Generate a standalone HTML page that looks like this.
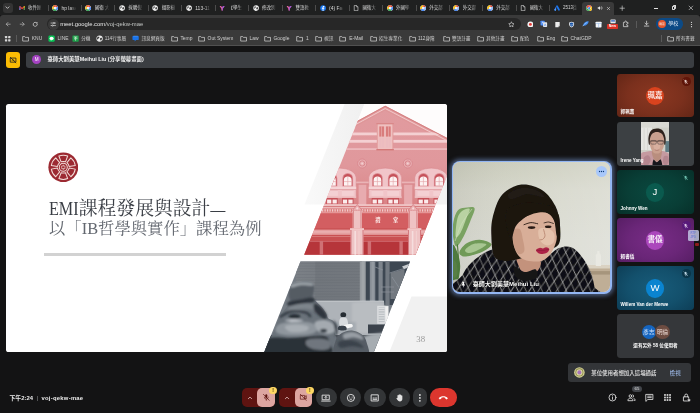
<!DOCTYPE html>
<html lang="zh-Hant">
<head>
<meta charset="utf-8">
<title>Meet - voj-qekw-mae</title>
<style>
*{box-sizing:border-box;margin:0;padding:0}
html,body{width:700px;height:413px;overflow:hidden;background:#131314}
body{font-family:"Liberation Sans","Noto Sans CJK TC",sans-serif;color:#fff;position:relative}
#stage{position:absolute;left:0;top:0;width:700px;height:413px;overflow:hidden;background:#131314;will-change:transform}
#stage div,#stage span,#stage svg{position:absolute}
/* ---------- browser chrome ---------- */
#tabbar{left:0;top:0;width:700px;height:15.3px;background:#1f2020}
#toolbar{left:0;top:15.3px;width:700px;height:17.4px;background:#3a3a3a;border-radius:3px 3px 0 0}
#bookbar{left:0;top:32.6px;width:700px;height:13.4px;background:#3a3a3a;border-bottom:0.7px solid #505050}
#omni{left:46.5px;top:17.6px;width:474px;height:12.8px;border-radius:6.4px;background:#272727}
#url{left:60.2px;top:17.6px;height:12.8px;line-height:12.8px;font-size:5.87px;color:#c4c7c5;white-space:nowrap}
#url b{font-weight:400;color:#e8e8e8}
.tab{top:0;height:15.3px;width:33.4px}
.tab .tt{left:12.4px;top:0;width:15.4px;height:15.3px;line-height:16px;font-size:4.5px;color:#d8d8d8;white-space:nowrap;overflow:hidden;-webkit-mask-image:linear-gradient(90deg,#000 58%,transparent 96%);mask-image:linear-gradient(90deg,#000 58%,transparent 96%)}
.tab .tt.la{font-size:5px}
.tab .sep{left:32px;top:4.6px;width:0.6px;height:6.2px;background:#4c4c4c}
.tab svg{left:3.1px;top:4.6px;width:6.2px;height:6.2px}
#atab{left:581.6px;top:2px;width:32.6px;height:13.4px;background:#3a3a3a;border-radius:3px 3px 0 0}
.bm{top:33px;height:12.6px;line-height:12.8px;font-size:4.65px;color:#d0d0d0;white-space:nowrap}
.bi{top:35.6px;width:7px;height:7px}
.ext{top:20.3px;width:7.6px;height:7.6px}
/* ---------- meet ---------- */
#pbar{left:26.2px;top:52.1px;width:667.4px;height:15.6px;border-radius:3px;background:#3b3e42}
#pbar .av{left:6px;top:3.3px;width:9px;height:9px;border-radius:50%;background:#a442c2;font-size:4.6px;line-height:9.2px;text-align:center;color:#fff}
#pbar .tx{left:21.2px;top:0;height:15.6px;line-height:15.8px;font-size:5.4px;font-weight:700;white-space:nowrap;color:#f3f3f3}
#pico{left:6px;top:51.9px;width:14px;height:16px;border-radius:3px;background:#fbbc04}
#slide{left:6px;top:103.7px;width:441.3px;height:248.4px;border-radius:2.6px;background:#fff;overflow:hidden}
#t1{left:43.2px;top:93px;height:24px;line-height:24px;font-family:"Liberation Serif","Noto Serif CJK SC",serif;font-size:18.85px;color:#3a3e45;white-space:nowrap;letter-spacing:-0.05px}
#t2{left:43px;top:114.2px;height:22px;line-height:22px;font-family:"Liberation Serif","Noto Serif CJK SC",serif;font-size:16.35px;color:#62676f;white-space:nowrap}
#rule{left:38.3px;top:148.9px;width:182.2px;height:3px;background:#d2d2d2}
#pgn{left:410.3px;top:230.6px;font-family:"Liberation Serif",serif;font-size:8.8px;line-height:11px;color:#999;letter-spacing:0.1px}
#main{left:452px;top:161.2px;width:159.6px;height:132.4px;border-radius:8px;background:#93b6f3;box-shadow:0 0 4px 1.6px rgba(130,165,230,.5)}
#main .in{left:1.2px;top:1.2px;width:157.2px;height:130px;border-radius:6.8px;overflow:hidden;background:#d9dacf}
#main .nm{left:19.6px;top:116.9px;font-size:6.05px;line-height:10px;font-weight:700;color:#fff;white-space:nowrap;text-shadow:0 0 1.5px rgba(0,0,0,.9),0 0 1px rgba(0,0,0,.8)}
#main .more{left:142.7px;top:4px;width:11px;height:11px;border-radius:50%;background:#a8c7fa}
.tile{left:616.8px;width:77.4px;height:43.8px;border-radius:3.4px;overflow:hidden}
.tile .nm{left:3.8px;top:34.8px;height:8px;line-height:8px;font-size:4.55px;font-weight:700;color:#fff;white-space:nowrap}
.tile .av{left:28.9px;top:13.1px;width:18.6px;height:18.6px;border-radius:50%;text-align:center;line-height:18.8px;color:#fff;font-weight:500}
.tile .mu{left:65.1px;top:3.4px;width:8.8px;height:8.8px;border-radius:50%}
.tile .mu svg{left:1.6px;top:1.6px;width:5.6px;height:5.6px}
#toast{left:568px;top:362.6px;width:123px;height:19.8px;border-radius:3px;background:#333538}
#toast .tx{left:23.2px;top:0;height:19.8px;line-height:20px;font-size:5.45px;font-weight:500;color:#e6e6e6;white-space:nowrap}
#toast .lk{left:101.8px;top:0;height:19.8px;line-height:20px;font-size:5.45px;color:#a8c7fa;white-space:nowrap}
#clock{left:9.5px;top:391.7px;height:12px;line-height:12px;font-size:5.85px;font-weight:700;color:#ececec;white-space:nowrap}
.cb{top:388.4px;height:18.7px;border-radius:9.35px;background:#333537}
.cb svg{width:9.8px;height:9.8px;top:4.45px}
.ri{top:393.4px;width:9px;height:9px}
</style>
</head>
<body>
<div id="stage">

<div id="tabbar"></div>
<div id="atab"></div>
<div id="toolbar"></div>
<div id="bookbar"></div>
<div style="left:3px;top:2.6px;width:9.6px;height:10px;border-radius:3px;background:#343434"></div>
<svg viewBox="0 0 16 16" style="left:4.3px;top:4.2px;width:7px;height:7px"><path d="M4.5 6.5L8 10l3.5-3.5" fill="none" stroke="#e0e0e0" stroke-width="1.8" stroke-linecap="round" stroke-linejoin="round"/></svg>
<div class="tab" style="left:15.5px"><svg viewBox="0 0 16 16" style=""><path d="M1 3.5h2.6L8 7l4.4-3.5H15v9.5h-2.8V7.6L8 10.8 3.8 7.6V13H1z" fill="#ea4335"/><path d="M1 3.5h2.6v9.5H1z" fill="#4285f4"/><path d="M12.4 3.5H15v9.5h-2.6z" fill="#34a853"/><path d="M12.4 3.5H15v2l-2.6 2z" fill="#fbbc04"/><path d="M1 3.5h2.6v4L1 5.5z" fill="#c5221f"/></svg><div class="tt">收件匣</div><div class="sep"></div></div>
<div class="tab" style="left:49px"><svg viewBox="0 0 16 16" style=""><circle cx="8" cy="8" r="7.6" fill="#fff"/><path d="M8 .8A7.2 7.2 0 0 1 14.2 4.4L8 8z" fill="#ea4335"/><path d="M14.2 4.4A7.2 7.2 0 0 1 11.6 14.2L8 8z" fill="#4285f4"/><path d="M11.6 14.2A7.2 7.2 0 0 1 1.8 11.6L8 8z" fill="#34a853"/><path d="M1.8 11.6A7.2 7.2 0 0 1 8 .8L8 8z" fill="#fbbc04"/><path d="M3 3A7.2 7.2 0 0 1 8 .8L8 8z" fill="#ea4335"/><circle cx="8" cy="8" r="3.6" fill="#fff"/><circle cx="8" cy="8" r="2.7" fill="#e8eef8"/></svg><div class="tt la">hp laser</div><div class="sep"></div></div>
<div class="tab" style="left:82.4px"><svg viewBox="0 0 16 16" style=""><circle cx="8" cy="8" r="7.6" fill="#fff"/><path d="M8 .8A7.2 7.2 0 0 1 14.2 4.4L8 8z" fill="#ea4335"/><path d="M14.2 4.4A7.2 7.2 0 0 1 11.6 14.2L8 8z" fill="#4285f4"/><path d="M11.6 14.2A7.2 7.2 0 0 1 1.8 11.6L8 8z" fill="#34a853"/><path d="M1.8 11.6A7.2 7.2 0 0 1 8 .8L8 8z" fill="#fbbc04"/><path d="M3 3A7.2 7.2 0 0 1 8 .8L8 8z" fill="#ea4335"/><circle cx="8" cy="8" r="3.6" fill="#fff"/><circle cx="8" cy="8" r="2.7" fill="#e8eef8"/></svg><div class="tt">國衛 大</div><div class="sep"></div></div>
<div class="tab" style="left:115.9px"><svg viewBox="0 0 16 16" style=""><circle cx="8" cy="8" r="7.2" fill="#f1f1f1"/><path d="M4.5 3.2l2.6.6.6 2-2 1.6-1.4 2.4L3 8.2zM9 6.2l3-.8 1.2 3-1.8 3.4-2.2-.6-.8-2.4z" fill="#3c3c3c"/></svg><div class="tt">採購倪</div><div class="sep"></div></div>
<div class="tab" style="left:149.3px"><svg viewBox="0 0 16 16" style=""><circle cx="8" cy="8" r="7.2" fill="#f1f1f1"/><path d="M4.5 3.2l2.6.6.6 2-2 1.6-1.4 2.4L3 8.2zM9 6.2l3-.8 1.2 3-1.8 3.4-2.2-.6-.8-2.4z" fill="#3c3c3c"/></svg><div class="tt">攝影樹</div><div class="sep"></div></div>
<div class="tab" style="left:182.8px"><svg viewBox="0 0 16 16" style=""><circle cx="8" cy="8" r="7.2" fill="#f1f1f1"/><path d="M4.5 3.2l2.6.6.6 2-2 1.6-1.4 2.4L3 8.2zM9 6.2l3-.8 1.2 3-1.8 3.4-2.2-.6-.8-2.4z" fill="#3c3c3c"/></svg><div class="tt la">113-11</div><div class="sep"></div></div>
<div class="tab" style="left:216.2px"><svg viewBox="0 0 16 16" style=""><path d="M1.5 2.5h4L8 6.6l2.5-4.1h4L9.8 9.6v4.4H6.2V9.6z" fill="#e765a6"/><path d="M8 6.6l2.5-4.1h4L9.8 9.6v4.4H8z" fill="#9c57d6"/></svg><div class="tt">【學生</div><div class="sep"></div></div>
<div class="tab" style="left:249.7px"><svg viewBox="0 0 16 16" style=""><circle cx="8" cy="8" r="7.2" fill="#f1f1f1"/><path d="M4.5 3.2l2.6.6.6 2-2 1.6-1.4 2.4L3 8.2zM9 6.2l3-.8 1.2 3-1.8 3.4-2.2-.6-.8-2.4z" fill="#3c3c3c"/></svg><div class="tt">修改別</div><div class="sep"></div></div>
<div class="tab" style="left:283.1px"><svg viewBox="0 0 16 16" style=""><path d="M1.5 2.5h4L8 6.6l2.5-4.1h4L9.8 9.6v4.4H6.2V9.6z" fill="#e765a6"/><path d="M8 6.6l2.5-4.1h4L9.8 9.6v4.4H8z" fill="#9c57d6"/></svg><div class="tt">雙語教</div><div class="sep"></div></div>
<div class="tab" style="left:316.6px"><svg viewBox="0 0 16 16" style=""><circle cx="8" cy="8" r="7.5" fill="#1877f2"/><path d="M9 15.3V9.6h1.9l.3-2.2H9V6c0-.7.2-1.1 1.1-1.1h1.2V3a13 13 0 0 0-1.8-.1C7.9 2.9 6.8 3.9 6.8 5.8v1.6H4.9v2.2h1.9v5.7z" fill="#fff"/></svg><div class="tt la">(4) Fac</div><div class="sep"></div></div>
<div class="tab" style="left:350px"><svg viewBox="0 0 16 16" style=""><path d="M3.2 1.4h6.2l3.4 3.4v9.8H3.2z" fill="none" stroke="#e6e6e6" stroke-width="1.5" stroke-linejoin="round"/><path d="M9.2 1.6v3.4h3.4" fill="none" stroke="#e6e6e6" stroke-width="1.3"/></svg><div class="tt">國衛大</div><div class="sep"></div></div>
<div class="tab" style="left:383.5px"><svg viewBox="0 0 16 16" style=""><circle cx="8" cy="8" r="7.6" fill="#fff"/><path d="M8 .8A7.2 7.2 0 0 1 14.2 4.4L8 8z" fill="#ea4335"/><path d="M14.2 4.4A7.2 7.2 0 0 1 11.6 14.2L8 8z" fill="#4285f4"/><path d="M11.6 14.2A7.2 7.2 0 0 1 1.8 11.6L8 8z" fill="#34a853"/><path d="M1.8 11.6A7.2 7.2 0 0 1 8 .8L8 8z" fill="#fbbc04"/><path d="M3 3A7.2 7.2 0 0 1 8 .8L8 8z" fill="#ea4335"/><circle cx="8" cy="8" r="3.6" fill="#fff"/><circle cx="8" cy="8" r="2.7" fill="#e8eef8"/></svg><div class="tt">外國學</div><div class="sep"></div></div>
<div class="tab" style="left:416.9px"><svg viewBox="0 0 16 16" style=""><circle cx="8" cy="8" r="7.6" fill="#f4f4f4"/><path d="M8 .8A7.2 7.2 0 0 1 14.2 4.4L8 8z" fill="#ea4335"/><path d="M14.2 4.4A7.2 7.2 0 0 1 11.6 14.2L8 8z" fill="#8ab4f8"/><path d="M11.6 14.2A7.2 7.2 0 0 1 1.8 11.6L8 8z" fill="#4285f4"/><path d="M1.8 11.6A7.2 7.2 0 0 1 8 .8L8 8z" fill="#fbbc04"/><circle cx="8" cy="8" r="3.4" fill="#e9eef6"/></svg><div class="tt">外交部</div><div class="sep"></div></div>
<div class="tab" style="left:450.4px"><svg viewBox="0 0 16 16" style=""><circle cx="8" cy="8" r="7.6" fill="#f4f4f4"/><path d="M8 .8A7.2 7.2 0 0 1 14.2 4.4L8 8z" fill="#ea4335"/><path d="M14.2 4.4A7.2 7.2 0 0 1 11.6 14.2L8 8z" fill="#8ab4f8"/><path d="M11.6 14.2A7.2 7.2 0 0 1 1.8 11.6L8 8z" fill="#4285f4"/><path d="M1.8 11.6A7.2 7.2 0 0 1 8 .8L8 8z" fill="#fbbc04"/><circle cx="8" cy="8" r="3.4" fill="#e9eef6"/></svg><div class="tt">外交部</div><div class="sep"></div></div>
<div class="tab" style="left:483.8px"><svg viewBox="0 0 16 16" style=""><circle cx="8" cy="8" r="7.6" fill="#f4f4f4"/><path d="M8 .8A7.2 7.2 0 0 1 14.2 4.4L8 8z" fill="#ea4335"/><path d="M14.2 4.4A7.2 7.2 0 0 1 11.6 14.2L8 8z" fill="#8ab4f8"/><path d="M11.6 14.2A7.2 7.2 0 0 1 1.8 11.6L8 8z" fill="#4285f4"/><path d="M1.8 11.6A7.2 7.2 0 0 1 8 .8L8 8z" fill="#fbbc04"/><circle cx="8" cy="8" r="3.4" fill="#e9eef6"/></svg><div class="tt">外交部</div><div class="sep"></div></div>
<div class="tab" style="left:517.2px"><svg viewBox="0 0 16 16" style=""><path d="M3.2 1.4h6.2l3.4 3.4v9.8H3.2z" fill="none" stroke="#e6e6e6" stroke-width="1.5" stroke-linejoin="round"/><path d="M9.2 1.6v3.4h3.4" fill="none" stroke="#e6e6e6" stroke-width="1.3"/></svg><div class="tt">國衛大</div><div class="sep"></div></div>
<div class="tab" style="left:550.7px"><svg viewBox="0 0 16 16" style=""><path d="M6.2 2.2L1.3 11.2a2.3 2.3 0 0 0 4 2.3z" fill="#3b82f6"/><path d="M9.8 2.2a2.3 2.3 0 0 0-4 2.3l5 9a2.3 2.3 0 0 0 4-2.3z" fill="#1a73e8"/><circle cx="3.3" cy="12.3" r="2.3" fill="#4f9cf9"/></svg><div class="tt">2513街</div></div>
<svg viewBox="0 0 16 16" style="left:586.1px;top:4.7px;width:6.3px;height:6.3px"><circle cx="8" cy="8" r="7.5" fill="#fff"/><path d="M8 .5a7.5 7.5 0 0 1 6.5 3.75H8L4.75 9.9 1.5 4.25A7.5 7.5 0 0 1 8 .5z" fill="#ea4335"/><path d="M14.5 4.25A7.5 7.5 0 0 1 8 15.5l3.25-5.6z" fill="#fbbc04"/><path d="M8 15.5A7.5 7.5 0 0 1 1.5 4.25L4.75 9.9z" fill="#34a853"/><path d="M8 15.5l3.25-5.6H4.75z" fill="#34a853"/><path d="M14.5 4.25H8l3.25 5.65z" fill="#fbbc04"/><circle cx="8" cy="8" r="3.5" fill="#fff"/><circle cx="8" cy="8" r="2.75" fill="#4285f4"/></svg>
<svg viewBox="0 0 16 16" style="left:597px;top:5.4px;width:6px;height:6px"><path d="M2 6v4h2.6L8 13V3L4.6 6z" fill="#e3e3e3"/><path d="M10 5.2a4 4 0 0 1 0 5.6M11.8 3.4a6.5 6.5 0 0 1 0 9.2" fill="none" stroke="#e3e3e3" stroke-width="1.3"/></svg>
<svg viewBox="0 0 16 16" style="left:605.6px;top:5.9px;width:5px;height:5px"><path d="M4 4l8 8M12 4l-8 8" stroke="#e3e3e3" stroke-width="1.7" stroke-linecap="round"/></svg>
<svg viewBox="0 0 16 16" style="left:618.5px;top:5.1px;width:6.4px;height:6.4px"><path d="M8 2.5v11M2.5 8h11" stroke="#dcdcdc" stroke-width="1.6" stroke-linecap="round"/></svg>
<div style="left:654px;top:7.9px;width:4.2px;height:0.6px;background:#e0e0e0"></div>
<div style="left:671.6px;top:6.4px;width:3.6px;height:3.6px;border:0.55px solid #dcdcdc;border-radius:0.8px"></div>
<div style="left:672.7px;top:5.3px;width:3.6px;height:3.6px;border-top:0.55px solid #dcdcdc;border-right:0.55px solid #dcdcdc;border-radius:0.8px"></div>
<svg viewBox="0 0 16 16" style="left:688.3px;top:5.2px;width:5.8px;height:5.8px"><path d="M3 3l10 10M13 3L3 13" stroke="#ececec" stroke-width="1.6" stroke-linecap="round"/></svg>
<svg viewBox="0 0 16 16" style="left:5.2px;top:20.8px;width:6.4px;height:6.4px"><path d="M13 8H3.5M7.5 3.5L3 8l4.5 4.5" fill="none" stroke="#bdbdbd" stroke-width="1.7" stroke-linecap="round" stroke-linejoin="round"/></svg>
<svg viewBox="0 0 16 16" style="left:18.8px;top:20.8px;width:6.4px;height:6.4px"><path d="M3 8h9.5M8.5 3.5L13 8l-4.5 4.5" fill="none" stroke="#bdbdbd" stroke-width="1.7" stroke-linecap="round" stroke-linejoin="round"/></svg>
<svg viewBox="0 0 16 16" style="left:32.4px;top:20.7px;width:6.6px;height:6.6px"><path d="M13 8a5 5 0 1 1-1.6-3.7" fill="none" stroke="#e0e0e0" stroke-width="1.7" stroke-linecap="round"/><path d="M13.3 2.2v3.6H9.7z" fill="#e0e0e0"/></svg>
<div id="omni"></div>
<div style="left:47.5px;top:18.5px;width:11px;height:11px;border-radius:50%;background:#3a3a3a"></div>
<svg viewBox="0 0 16 16" style="left:49.7px;top:20.7px;width:6.6px;height:6.6px"><path d="M2.5 5h5M11.5 5h2M2.5 11h2M8.5 11h5" stroke="#e6e6e6" stroke-width="1.5" stroke-linecap="round"/><circle cx="9.6" cy="5" r="1.7" fill="none" stroke="#e6e6e6" stroke-width="1.4"/><circle cx="6.4" cy="11" r="1.7" fill="none" stroke="#e6e6e6" stroke-width="1.4"/></svg>
<div id="url"><b>meet.google.com</b>/voj-qekw-mae</div>
<svg viewBox="0 0 16 16" style="left:507.7px;top:20.6px;width:6.8px;height:6.8px"><path d="M8 1.8l1.9 4.1 4.4.5-3.3 3 .9 4.4L8 11.6l-3.9 2.2.9-4.4-3.3-3 4.4-.5z" fill="none" stroke="#e3e3e3" stroke-width="1.4" stroke-linejoin="round"/></svg>
<svg viewBox="0 0 16 16" style="left:526.6px;top:20.7px;width:6.8px;height:6.8px"><circle cx="8" cy="8" r="7" fill="#f4f4f4"/><circle cx="8" cy="8" r="3.4" fill="#e53935"/></svg>
<svg viewBox="0 0 16 16" style="left:540px;top:20.3px;width:7.6px;height:7.6px"><rect x="1" y="1.5" width="9" height="10" rx="1.3" fill="#4285f4"/><rect x="6.5" y="5" width="8.5" height="9.5" rx="1.3" fill="#e8eaed"/><path d="M3.5 4.5h4M5.5 3.5v1c0 2-1 3.5-2.5 4" stroke="#fff" stroke-width="1" fill="none"/><path d="M9 13l1.8-5 1.8 5" stroke="#4285f4" stroke-width="1.1" fill="none"/></svg>
<svg viewBox="0 0 16 16" style="left:553.6px;top:20.6px;width:7px;height:7px"><path d="M3 2h10v9l-3 3H3z" fill="#ececec"/><path d="M13 11h-3v3z" fill="#9a9a9a"/></svg>
<svg viewBox="0 0 16 16" style="left:567.6px;top:20.5px;width:7.2px;height:7.2px"><path d="M8 1.5l5.5 1.8v4.2c0 3.3-2.3 5.8-5.5 7-3.2-1.2-5.5-3.7-5.5-7V3.3z" fill="#e8eaed"/><path d="M8 3.4l3.7 1.2v3c0 2.3-1.5 4-3.7 5-2.2-1-3.7-2.7-3.7-5v-3z" fill="#1a56a8"/><path d="M6 8l1.5 1.5L10.2 6.6" stroke="#fff" stroke-width="1.2" fill="none"/></svg>
<svg viewBox="0 0 16 16" style="left:581.7px;top:20.4px;width:7.4px;height:7.4px"><path d="M1.5 12.5C4 5 9 2.5 14.5 3c-1 5.5-5 9-11 9.5z" fill="#3d8bf0"/><path d="M1.5 13.5c3-4 6-6.5 10-8.5" stroke="#e3f0ff" stroke-width="1" fill="none"/></svg>
<svg viewBox="0 0 16 16" style="left:595px;top:20.5px;width:7.2px;height:7.2px"><rect x="1.5" y="1.5" width="13" height="13" rx="1.5" fill="#f4f7fb"/><path d="M1.5 5.5h13M8 5.5v9" stroke="#8fb4e8" stroke-width="1.2"/></svg>
<svg viewBox="0 0 16 16" style="left:608.5px;top:19.3px;width:7.6px;height:7.6px"><rect x="3" y="1" width="11" height="8" rx="1" fill="#e8eaed"/><rect x="4.5" y="2.5" width="8" height="3" fill="#3b6fc4"/></svg>
<div style="left:607.2px;top:24.2px;width:10.4px;height:4.8px;border-radius:0.8px;background:#d93025;font-size:3.5px;line-height:4.9px;text-align:center;color:#fff;font-weight:700">New</div>
<svg viewBox="0 0 16 16" style="left:622.2px;top:20.3px;width:7.6px;height:7.6px"><path d="M3 5h3V3.8a1.7 1.7 0 0 1 3.4 0V5H12.5v3.2h-1.2a1.7 1.7 0 0 0 0 3.4h1.2V14H3z" fill="none" stroke="#e3e3e3" stroke-width="1.5" stroke-linejoin="round"/></svg>
<div style="left:636px;top:20.6px;width:0.6px;height:7px;background:#5a5a5a"></div>
<svg viewBox="0 0 16 16" style="left:643.2px;top:20.4px;width:7.2px;height:7.2px"><path d="M8 2.5v7.5M4.5 7L8 10.5 11.5 7M3 13.5h10" fill="none" stroke="#e3e3e3" stroke-width="1.6" stroke-linecap="round" stroke-linejoin="round"/></svg>
<div style="left:656px;top:18.3px;width:27.4px;height:11.4px;border-radius:5.7px;background:#0c4a86"></div>
<div style="left:658.2px;top:20.1px;width:7.8px;height:7.8px;border-radius:50%;background:#e2552c;font-size:2.8px;line-height:8px;text-align:center;color:#fff">珮嘉</div>
<div style="left:668.2px;top:18.3px;height:11.4px;line-height:11.6px;font-size:5.1px;color:#dfe9f6;white-space:nowrap">學校</div>
<svg viewBox="0 0 16 16" style="left:687.6px;top:20.5px;width:7px;height:7px"><circle cx="8" cy="3" r="1.4" fill="#e3e3e3"/><circle cx="8" cy="8" r="1.4" fill="#e3e3e3"/><circle cx="8" cy="13" r="1.4" fill="#e3e3e3"/></svg>
<svg viewBox="0 0 16 16" style="left:4px;top:35.2px;width:7.4px;height:7.4px"><rect x="2" y="2" width="5" height="5" rx="1" fill="#d8d8d8"/><rect x="9" y="2" width="5" height="5" rx="1" fill="#d8d8d8"/><rect x="2" y="9" width="5" height="5" rx="1" fill="#d8d8d8"/><rect x="9" y="9" width="5" height="5" rx="1" fill="#d8d8d8"/></svg>
<div style="left:16.4px;top:35.4px;width:0.6px;height:7px;background:#5a5a5a"></div>
<svg viewBox="0 0 16 16" style="left:22px;top:35.4px;width:7.2px;height:7.2px"><path d="M1.5 3.5h4.5l1.5 1.8h7v8.2h-13z" fill="none" stroke="#dcdcdc" stroke-width="1.5" stroke-linejoin="round"/></svg>
<div class="bm" style="left:31.8px;font-size:4.95px">KNU</div>
<svg viewBox="0 0 16 16" style="left:47.8px;top:35.4px;width:7.2px;height:7.2px"><rect x="1" y="1" width="14" height="14" rx="3" fill="#06c755"/><ellipse cx="8" cy="7.6" rx="4.6" ry="3.8" fill="#fff"/><path d="M6.5 10.8l-.3 2 2.4-1.6z" fill="#fff"/></svg>
<div class="bm" style="left:57.6px;font-size:4.95px">LINE</div>
<svg viewBox="0 0 16 16" style="left:71.9px;top:35.4px;width:7.2px;height:7.2px"><rect x="1" y="1" width="14" height="14" rx="1.5" fill="#1e9e4a"/><path d="M4 4.5h8M8 4.5v8M4.5 8.5h3M9.5 8h2.5" stroke="#eaffea" stroke-width="1.5"/></svg>
<div class="bm" style="left:81.2px">分機</div>
<svg viewBox="0 0 16 16" style="left:95.5px;top:35.4px;width:7.2px;height:7.2px"><circle cx="8" cy="8" r="7" fill="#e8e8e8"/><path d="M4 3.5l3 1 .5 2-2.5 1.5-1 2.5-2-2.5zM9.5 6.5l3-.5 1 2.5-2 3.5-2-.5-.5-2.5z" fill="#3a3a3a"/></svg>
<div class="bm" style="left:104.8px">114行事曆</div>
<svg viewBox="0 0 16 16" style="left:132.1px;top:35.4px;width:7.2px;height:7.2px"><path d="M2 2.5h12a1 1 0 0 1 1 1V10a1 1 0 0 1-1 1H9l-3 3.2V11H2a1 1 0 0 1-1-1V3.5a1 1 0 0 1 1-1z" fill="#1a73e8"/><path d="M3 2.5h10" stroke="#6fb1ff" stroke-width="1"/></svg>
<div class="bm" style="left:141.4px">訊息網頁版</div>
<svg viewBox="0 0 16 16" style="left:170.6px;top:35.4px;width:7.2px;height:7.2px"><path d="M1.5 3.5h4.5l1.5 1.8h7v8.2h-13z" fill="none" stroke="#dcdcdc" stroke-width="1.5" stroke-linejoin="round"/></svg>
<div class="bm" style="left:180.4px;font-size:4.95px">Temp</div>
<svg viewBox="0 0 16 16" style="left:197.8px;top:35.4px;width:7.2px;height:7.2px"><path d="M1.5 3.5h4.5l1.5 1.8h7v8.2h-13z" fill="none" stroke="#dcdcdc" stroke-width="1.5" stroke-linejoin="round"/></svg>
<div class="bm" style="left:207.6px;font-size:4.95px">Out System</div>
<svg viewBox="0 0 16 16" style="left:239.6px;top:35.4px;width:7.2px;height:7.2px"><path d="M1.5 3.5h4.5l1.5 1.8h7v8.2h-13z" fill="none" stroke="#dcdcdc" stroke-width="1.5" stroke-linejoin="round"/></svg>
<div class="bm" style="left:249.4px;font-size:4.95px">Law</div>
<svg viewBox="0 0 16 16" style="left:263.7px;top:35.4px;width:7.2px;height:7.2px"><path d="M1.5 3.5h4.5l1.5 1.8h7v8.2h-13z" fill="none" stroke="#dcdcdc" stroke-width="1.5" stroke-linejoin="round"/></svg>
<div class="bm" style="left:273.5px;font-size:4.95px">Google</div>
<svg viewBox="0 0 16 16" style="left:296.1px;top:35.4px;width:7.2px;height:7.2px"><path d="M1.5 3.5h4.5l1.5 1.8h7v8.2h-13z" fill="none" stroke="#dcdcdc" stroke-width="1.5" stroke-linejoin="round"/></svg>
<div class="bm" style="left:305.9px;font-size:4.95px">1</div>
<svg viewBox="0 0 16 16" style="left:314.8px;top:35.4px;width:7.2px;height:7.2px"><path d="M1.5 3.5h4.5l1.5 1.8h7v8.2h-13z" fill="none" stroke="#dcdcdc" stroke-width="1.5" stroke-linejoin="round"/></svg>
<div class="bm" style="left:324.1px">視訊</div>
<svg viewBox="0 0 16 16" style="left:339.4px;top:35.4px;width:7.2px;height:7.2px"><path d="M1.5 3.5h4.5l1.5 1.8h7v8.2h-13z" fill="none" stroke="#dcdcdc" stroke-width="1.5" stroke-linejoin="round"/></svg>
<div class="bm" style="left:349.2px;font-size:4.95px">E-Mail</div>
<svg viewBox="0 0 16 16" style="left:369.8px;top:35.4px;width:7.2px;height:7.2px"><path d="M1.5 3.5h4.5l1.5 1.8h7v8.2h-13z" fill="none" stroke="#dcdcdc" stroke-width="1.5" stroke-linejoin="round"/></svg>
<div class="bm" style="left:379.1px">招生專業化</div>
<svg viewBox="0 0 16 16" style="left:408.7px;top:35.4px;width:7.2px;height:7.2px"><path d="M1.5 3.5h4.5l1.5 1.8h7v8.2h-13z" fill="none" stroke="#dcdcdc" stroke-width="1.5" stroke-linejoin="round"/></svg>
<div class="bm" style="left:418px">112身障</div>
<svg viewBox="0 0 16 16" style="left:442.6px;top:35.4px;width:7.2px;height:7.2px"><path d="M1.5 3.5h4.5l1.5 1.8h7v8.2h-13z" fill="none" stroke="#dcdcdc" stroke-width="1.5" stroke-linejoin="round"/></svg>
<div class="bm" style="left:451.9px">雙語計畫</div>
<svg viewBox="0 0 16 16" style="left:476.8px;top:35.4px;width:7.2px;height:7.2px"><path d="M1.5 3.5h4.5l1.5 1.8h7v8.2h-13z" fill="none" stroke="#dcdcdc" stroke-width="1.5" stroke-linejoin="round"/></svg>
<div class="bm" style="left:486.1px">其他計畫</div>
<svg viewBox="0 0 16 16" style="left:510.6px;top:35.4px;width:7.2px;height:7.2px"><path d="M1.5 3.5h4.5l1.5 1.8h7v8.2h-13z" fill="none" stroke="#dcdcdc" stroke-width="1.5" stroke-linejoin="round"/></svg>
<div class="bm" style="left:519.9px">配色</div>
<svg viewBox="0 0 16 16" style="left:536.6px;top:35.4px;width:7.2px;height:7.2px"><path d="M1.5 3.5h4.5l1.5 1.8h7v8.2h-13z" fill="none" stroke="#dcdcdc" stroke-width="1.5" stroke-linejoin="round"/></svg>
<div class="bm" style="left:546.4px;font-size:4.95px">Eng</div>
<svg viewBox="0 0 16 16" style="left:560.7px;top:35.4px;width:7.2px;height:7.2px"><path d="M1.5 3.5h4.5l1.5 1.8h7v8.2h-13z" fill="none" stroke="#dcdcdc" stroke-width="1.5" stroke-linejoin="round"/></svg>
<div class="bm" style="left:570.5px;font-size:4.95px">ChatGDP</div>
<svg viewBox="0 0 16 16" style="left:666.7px;top:35.4px;width:7.2px;height:7.2px"><path d="M1.5 3.5h4.5l1.5 1.8h7v8.2h-13z" fill="none" stroke="#dcdcdc" stroke-width="1.5" stroke-linejoin="round"/></svg>
<div class="bm" style="left:676px">所有書籤</div>
<div style="left:661px;top:35.4px;width:0.6px;height:7px;background:#5a5a5a"></div>
<div id="pico"></div>
<svg viewBox="0 0 16 16" style="left:8.9px;top:55.8px;width:8.2px;height:8.2px"><path d="M2.5 4h11v8h-11z" fill="none" stroke="#1f1f1f" stroke-width="1.6" stroke-linejoin="round"/><path d="M5.5 9.5L8 7l2.5 2.5" fill="none" stroke="#1f1f1f" stroke-width="1.3"/><path d="M2 2l12 12" stroke="#1f1f1f" stroke-width="1.5"/></svg>
<div id="pbar"><div class="av">M</div><div class="tx">臺師大劉美慧Meihui Liu (分享螢幕畫面)</div></div>
<div id="slide">
<svg viewBox="0 0 700 413" style="left:-6px;top:-103.7px;width:700px;height:413px">
<defs>
<clipPath id="cpR"><path d="M364.6 103.7H476L415.5 254.7H304.2z"/></clipPath>
<clipPath id="cpW"><path d="M385.2 106.8L450 140.5V256H300V153z"/></clipPath>
<clipPath id="cpG"><path d="M300.5 261.5H410L373.8 352.1H264.3z"/></clipPath>
<linearGradient id="gWall" x1="0" y1="104" x2="0" y2="255" gradientUnits="userSpaceOnUse">
<stop offset="0" stop-color="#e19b9f"/><stop offset="0.4" stop-color="#e0989c"/><stop offset="0.62" stop-color="#db888b"/><stop offset="0.8" stop-color="#d67274"/><stop offset="1" stop-color="#c95454"/>
</linearGradient>
<linearGradient id="gBand" x1="305" y1="0" x2="365" y2="0" gradientUnits="userSpaceOnUse">
<stop offset="0" stop-color="#f9f9f9"/><stop offset="1" stop-color="#f0f0f0"/>
</linearGradient>
<linearGradient id="gBrick" x1="296" y1="0" x2="362" y2="0" gradientUnits="userSpaceOnUse"><stop offset="0" stop-color="#7b8086"/><stop offset="0.28" stop-color="#787d83"/><stop offset="0.3" stop-color="#71767c"/><stop offset="1" stop-color="#73787e"/></linearGradient>
<filter id="b1" x="-20%" y="-20%" width="140%" height="140%"><feGaussianBlur stdDeviation="0.5"/></filter>
<filter id="b2" x="-20%" y="-20%" width="140%" height="140%"><feGaussianBlur stdDeviation="1.2"/></filter>
<filter id="b3" x="-30%" y="-30%" width="160%" height="160%"><feGaussianBlur stdDeviation="2.5"/></filter>
</defs>
<!-- decorative light grey shapes -->
<path d="M344.8 103.7H364.6L324.3 204.5H304.5z" fill="url(#gBand)"/>
<path d="M448 173.5V204.5H435.6z" fill="#f3f3f3"/>
<path d="M411.5 296.5H448V353H389z" fill="#f1f1f1"/>
<!-- red building -->
<g clip-path="url(#cpR)" id="bldg">
<rect x="300" y="103" width="150" height="153" fill="#fefcfc"/>
<path d="M385.2 105.8L450 139.5V256H300V152.7z" fill="url(#gWall)"/>
<path d="M330 136.2L385.2 106.3 450 140" stroke="#d58282" stroke-width="1.1" fill="none"/>
<path d="M330 138.4L385.2 108.5 450 142.2" stroke="#f2c8c8" stroke-width="1" fill="none"/>
<path d="M330 140L385.2 110.1 450 143.8" stroke="#de9393" stroke-width="0.6" fill="none"/>
<g clip-path="url(#cpW)">
<rect x="340" y="132.5" width="110" height="2.8" fill="#f4d0d2"/>
<rect x="340" y="139.9" width="110" height="2.8" fill="#f4d0d2"/>
<rect x="340" y="148.4" width="110" height="1.3" fill="#f1c6c9"/>
</g>
<rect x="376.8" y="123.6" width="16.6" height="27" fill="#e19a9a"/>
<rect x="377.7" y="124.2" width="14.7" height="25" fill="#efc0c0"/>
<rect x="379.3" y="126.4" width="4.8" height="10.2" fill="#d97c7c"/>
<rect x="385.9" y="126.4" width="4.8" height="10.2" fill="#d97c7c"/>
<rect x="379.3" y="137.6" width="4.8" height="10" fill="#ecbcc0"/>
<rect x="385.9" y="137.6" width="4.8" height="10" fill="#ecbcc0"/>
<rect x="381.5" y="126.4" width="0.5" height="21" fill="#efc0c0"/>
<rect x="388.1" y="126.4" width="0.5" height="21" fill="#efc0c0"/>
<rect x="376.4" y="149" width="17.4" height="1.4" fill="#d27878"/>
<rect x="376.4" y="123.2" width="17.4" height="1" fill="#d88484"/>
<circle cx="362.2" cy="163.5" r="4.5" fill="#e9b0b3" stroke="#d58086" stroke-width="0.7"/>
<circle cx="362.2" cy="163.5" r="2.6" fill="none" stroke="#d37e84" stroke-width="0.8"/>
<circle cx="362.2" cy="163.5" r="0.9" fill="#f3d0d2"/>
<circle cx="407.8" cy="163.5" r="4.5" fill="#e9b0b3" stroke="#d58086" stroke-width="0.7"/>
<circle cx="407.8" cy="163.5" r="2.6" fill="none" stroke="#d37e84" stroke-width="0.8"/>
<circle cx="407.8" cy="163.5" r="0.9" fill="#f3d0d2"/>
<path d="M323.2 197.1V177.6a16.5 9.5 0 0 1 33 0V197.1z" fill="#f1c5c9" stroke="#d9868c" stroke-width="0.6"/>
<path d="M326.6 186.4V178.4a5.3 5.3 0 0 1 10.7 0V186.4z" fill="#dd8d94"/>
<path d="M327.4 186V178.6a4.5 4.6 0 0 1 9.1 0V186z" fill="#c6525a"/>
<path d="M328.1 185.7V180.3a3.8 3.7 0 0 1 7.7 0V185.7z" fill="#fdf3f3"/>
<path d="M331.9 176.8V185.7M328.1 181.6h7.7" stroke="#e2a0a5" stroke-width="0.6" fill="none"/>
<rect x="326" y="189.8" width="11.9" height="6" fill="#f4d0d3"/>
<rect x="326" y="189.8" width="11.9" height="0.6" fill="#e2a2a7"/>
<rect x="326.2" y="197.8" width="11.5" height="6.2" fill="#c6525a"/>
<rect x="327.1" y="199.6" width="4.2" height="3.9" fill="#fcecec"/>
<rect x="332.6" y="199.6" width="4.2" height="3.9" fill="#fcecec"/>
<path d="M342.4 186.4V178.4a5.3 5.3 0 0 1 10.7 0V186.4z" fill="#dd8d94"/>
<path d="M343.2 186V178.6a4.5 4.6 0 0 1 9.1 0V186z" fill="#c6525a"/>
<path d="M343.9 185.7V180.3a3.8 3.7 0 0 1 7.7 0V185.7z" fill="#fdf3f3"/>
<path d="M347.8 176.8V185.7M343.9 181.6h7.7" stroke="#e2a0a5" stroke-width="0.6" fill="none"/>
<rect x="341.8" y="189.8" width="11.9" height="6" fill="#f4d0d3"/>
<rect x="341.8" y="189.8" width="11.9" height="0.6" fill="#e2a2a7"/>
<rect x="342" y="197.8" width="11.5" height="6.2" fill="#c6525a"/>
<rect x="342.9" y="199.6" width="4.2" height="3.9" fill="#fcecec"/>
<rect x="348.4" y="199.6" width="4.2" height="3.9" fill="#fcecec"/>
<rect x="323.2" y="186.7" width="33" height="2.6" fill="#f5d4d6"/>
<rect x="323.2" y="189.3" width="33" height="0.6" fill="#dc9096"/>
<rect x="323.2" y="196.6" width="33" height="1.1" fill="#f5d4d6"/>
<path d="M368.7 197.1V177.6a16.5 9.5 0 0 1 33 0V197.1z" fill="#f1c5c9" stroke="#d9868c" stroke-width="0.6"/>
<path d="M372.1 186.4V178.4a5.3 5.3 0 0 1 10.7 0V186.4z" fill="#dd8d94"/>
<path d="M372.9 186V178.6a4.5 4.6 0 0 1 9.1 0V186z" fill="#c6525a"/>
<path d="M373.6 185.7V180.3a3.8 3.7 0 0 1 7.7 0V185.7z" fill="#fdf3f3"/>
<path d="M377.4 176.8V185.7M373.6 181.6h7.7" stroke="#e2a0a5" stroke-width="0.6" fill="none"/>
<rect x="371.5" y="189.8" width="11.9" height="6" fill="#f4d0d3"/>
<rect x="371.5" y="189.8" width="11.9" height="0.6" fill="#e2a2a7"/>
<rect x="371.7" y="197.8" width="11.5" height="6.2" fill="#c6525a"/>
<rect x="372.6" y="199.6" width="4.2" height="3.9" fill="#fcecec"/>
<rect x="378.1" y="199.6" width="4.2" height="3.9" fill="#fcecec"/>
<path d="M387.9 186.4V178.4a5.3 5.3 0 0 1 10.7 0V186.4z" fill="#dd8d94"/>
<path d="M388.7 186V178.6a4.5 4.6 0 0 1 9.1 0V186z" fill="#c6525a"/>
<path d="M389.4 185.7V180.3a3.8 3.7 0 0 1 7.7 0V185.7z" fill="#fdf3f3"/>
<path d="M393.2 176.8V185.7M389.4 181.6h7.7" stroke="#e2a0a5" stroke-width="0.6" fill="none"/>
<rect x="387.3" y="189.8" width="11.9" height="6" fill="#f4d0d3"/>
<rect x="387.3" y="189.8" width="11.9" height="0.6" fill="#e2a2a7"/>
<rect x="387.5" y="197.8" width="11.5" height="6.2" fill="#c6525a"/>
<rect x="388.4" y="199.6" width="4.2" height="3.9" fill="#fcecec"/>
<rect x="393.9" y="199.6" width="4.2" height="3.9" fill="#fcecec"/>
<rect x="368.7" y="186.7" width="33" height="2.6" fill="#f5d4d6"/>
<rect x="368.7" y="189.3" width="33" height="0.6" fill="#dc9096"/>
<rect x="368.7" y="196.6" width="33" height="1.1" fill="#f5d4d6"/>
<path d="M414.7 197.1V177.6a16.5 9.5 0 0 1 33 0V197.1z" fill="#f1c5c9" stroke="#d9868c" stroke-width="0.6"/>
<path d="M418.1 186.4V178.4a5.3 5.3 0 0 1 10.7 0V186.4z" fill="#dd8d94"/>
<path d="M418.9 186V178.6a4.5 4.6 0 0 1 9.1 0V186z" fill="#c6525a"/>
<path d="M419.6 185.7V180.3a3.8 3.7 0 0 1 7.7 0V185.7z" fill="#fdf3f3"/>
<path d="M423.4 176.8V185.7M419.6 181.6h7.7" stroke="#e2a0a5" stroke-width="0.6" fill="none"/>
<rect x="417.5" y="189.8" width="11.9" height="6" fill="#f4d0d3"/>
<rect x="417.5" y="189.8" width="11.9" height="0.6" fill="#e2a2a7"/>
<rect x="417.7" y="197.8" width="11.5" height="6.2" fill="#c6525a"/>
<rect x="418.6" y="199.6" width="4.2" height="3.9" fill="#fcecec"/>
<rect x="424.1" y="199.6" width="4.2" height="3.9" fill="#fcecec"/>
<path d="M433.9 186.4V178.4a5.3 5.3 0 0 1 10.7 0V186.4z" fill="#dd8d94"/>
<path d="M434.7 186V178.6a4.5 4.6 0 0 1 9.1 0V186z" fill="#c6525a"/>
<path d="M435.4 185.7V180.3a3.8 3.7 0 0 1 7.7 0V185.7z" fill="#fdf3f3"/>
<path d="M439.2 176.8V185.7M435.4 181.6h7.7" stroke="#e2a0a5" stroke-width="0.6" fill="none"/>
<rect x="433.3" y="189.8" width="11.9" height="6" fill="#f4d0d3"/>
<rect x="433.3" y="189.8" width="11.9" height="0.6" fill="#e2a2a7"/>
<rect x="433.5" y="197.8" width="11.5" height="6.2" fill="#c6525a"/>
<rect x="434.4" y="199.6" width="4.2" height="3.9" fill="#fcecec"/>
<rect x="439.9" y="199.6" width="4.2" height="3.9" fill="#fcecec"/>
<rect x="414.7" y="186.7" width="33" height="2.6" fill="#f5d4d6"/>
<rect x="414.7" y="189.3" width="33" height="0.6" fill="#dc9096"/>
<rect x="414.7" y="196.6" width="33" height="1.1" fill="#f5d4d6"/>
<rect x="358.6" y="184.6" width="7.7" height="20" fill="#e8abaf"/>
<rect x="356.2" y="181.6" width="12.5" height="2" fill="#eab4b6"/>
<rect x="356.2" y="183.6" width="12.5" height="0.7" fill="#d48084"/>
<rect x="404.1" y="184.6" width="8.2" height="20" fill="#e8abaf"/>
<rect x="401.7" y="181.6" width="13" height="2" fill="#eab4b6"/>
<rect x="401.7" y="183.6" width="13" height="0.7" fill="#d48084"/>
<rect x="312.4" y="184.6" width="8.4" height="20" fill="#e8abaf"/>
<rect x="310" y="181.6" width="13.2" height="2" fill="#eab4b6"/>
<rect x="310" y="183.6" width="13.2" height="0.7" fill="#d48084"/>
<rect x="300" y="204.3" width="150" height="1.6" fill="#f4d2d3"/>
<rect x="300" y="205.9" width="150" height="1.2" fill="#d67e80"/>
<rect x="300" y="207.1" width="150" height="1.5" fill="#efbfc0"/>
<rect x="300" y="208.6" width="150" height="3.6" fill="#dc8080"/>
<rect x="302" y="209.2" width="1.2" height="2.4" fill="#f3cccc"/>
<rect x="304.5" y="209.2" width="1.2" height="2.4" fill="#f3cccc"/>
<rect x="307" y="209.2" width="1.2" height="2.4" fill="#f3cccc"/>
<rect x="309.5" y="209.2" width="1.2" height="2.4" fill="#f3cccc"/>
<rect x="312" y="209.2" width="1.2" height="2.4" fill="#f3cccc"/>
<rect x="314.5" y="209.2" width="1.2" height="2.4" fill="#f3cccc"/>
<rect x="317" y="209.2" width="1.2" height="2.4" fill="#f3cccc"/>
<rect x="319.5" y="209.2" width="1.2" height="2.4" fill="#f3cccc"/>
<rect x="322" y="209.2" width="1.2" height="2.4" fill="#f3cccc"/>
<rect x="324.5" y="209.2" width="1.2" height="2.4" fill="#f3cccc"/>
<rect x="327" y="209.2" width="1.2" height="2.4" fill="#f3cccc"/>
<rect x="329.5" y="209.2" width="1.2" height="2.4" fill="#f3cccc"/>
<rect x="332" y="209.2" width="1.2" height="2.4" fill="#f3cccc"/>
<rect x="334.5" y="209.2" width="1.2" height="2.4" fill="#f3cccc"/>
<rect x="337" y="209.2" width="1.2" height="2.4" fill="#f3cccc"/>
<rect x="339.5" y="209.2" width="1.2" height="2.4" fill="#f3cccc"/>
<rect x="342" y="209.2" width="1.2" height="2.4" fill="#f3cccc"/>
<rect x="344.5" y="209.2" width="1.2" height="2.4" fill="#f3cccc"/>
<rect x="347" y="209.2" width="1.2" height="2.4" fill="#f3cccc"/>
<rect x="349.5" y="209.2" width="1.2" height="2.4" fill="#f3cccc"/>
<rect x="352" y="209.2" width="1.2" height="2.4" fill="#f3cccc"/>
<rect x="354.5" y="209.2" width="1.2" height="2.4" fill="#f3cccc"/>
<rect x="357" y="209.2" width="1.2" height="2.4" fill="#f3cccc"/>
<rect x="359.5" y="209.2" width="1.2" height="2.4" fill="#f3cccc"/>
<rect x="362" y="209.2" width="1.2" height="2.4" fill="#f3cccc"/>
<rect x="364.5" y="209.2" width="1.2" height="2.4" fill="#f3cccc"/>
<rect x="367" y="209.2" width="1.2" height="2.4" fill="#f3cccc"/>
<rect x="369.5" y="209.2" width="1.2" height="2.4" fill="#f3cccc"/>
<rect x="372" y="209.2" width="1.2" height="2.4" fill="#f3cccc"/>
<rect x="374.5" y="209.2" width="1.2" height="2.4" fill="#f3cccc"/>
<rect x="377" y="209.2" width="1.2" height="2.4" fill="#f3cccc"/>
<rect x="379.5" y="209.2" width="1.2" height="2.4" fill="#f3cccc"/>
<rect x="382" y="209.2" width="1.2" height="2.4" fill="#f3cccc"/>
<rect x="384.5" y="209.2" width="1.2" height="2.4" fill="#f3cccc"/>
<rect x="387" y="209.2" width="1.2" height="2.4" fill="#f3cccc"/>
<rect x="389.5" y="209.2" width="1.2" height="2.4" fill="#f3cccc"/>
<rect x="392" y="209.2" width="1.2" height="2.4" fill="#f3cccc"/>
<rect x="394.5" y="209.2" width="1.2" height="2.4" fill="#f3cccc"/>
<rect x="397" y="209.2" width="1.2" height="2.4" fill="#f3cccc"/>
<rect x="399.5" y="209.2" width="1.2" height="2.4" fill="#f3cccc"/>
<rect x="402" y="209.2" width="1.2" height="2.4" fill="#f3cccc"/>
<rect x="404.5" y="209.2" width="1.2" height="2.4" fill="#f3cccc"/>
<rect x="407" y="209.2" width="1.2" height="2.4" fill="#f3cccc"/>
<rect x="409.5" y="209.2" width="1.2" height="2.4" fill="#f3cccc"/>
<rect x="412" y="209.2" width="1.2" height="2.4" fill="#f3cccc"/>
<rect x="414.5" y="209.2" width="1.2" height="2.4" fill="#f3cccc"/>
<rect x="417" y="209.2" width="1.2" height="2.4" fill="#f3cccc"/>
<rect x="419.5" y="209.2" width="1.2" height="2.4" fill="#f3cccc"/>
<rect x="422" y="209.2" width="1.2" height="2.4" fill="#f3cccc"/>
<rect x="424.5" y="209.2" width="1.2" height="2.4" fill="#f3cccc"/>
<rect x="427" y="209.2" width="1.2" height="2.4" fill="#f3cccc"/>
<rect x="429.5" y="209.2" width="1.2" height="2.4" fill="#f3cccc"/>
<rect x="432" y="209.2" width="1.2" height="2.4" fill="#f3cccc"/>
<rect x="434.5" y="209.2" width="1.2" height="2.4" fill="#f3cccc"/>
<rect x="437" y="209.2" width="1.2" height="2.4" fill="#f3cccc"/>
<rect x="439.5" y="209.2" width="1.2" height="2.4" fill="#f3cccc"/>
<rect x="442" y="209.2" width="1.2" height="2.4" fill="#f3cccc"/>
<rect x="444.5" y="209.2" width="1.2" height="2.4" fill="#f3cccc"/>
<rect x="447" y="209.2" width="1.2" height="2.4" fill="#f3cccc"/>
<rect x="449.5" y="209.2" width="1.2" height="2.4" fill="#f3cccc"/>
<path d="M352.3 210.6L357.3 204.4 362.3 210.6z" fill="#eaacae" stroke="#cf7478" stroke-width="0.6"/>
<circle cx="357.3" cy="208.4" r="1.1" fill="#f6dcdc"/>
<path d="M408.2 210.6L413.2 204.4 418.2 210.6z" fill="#eaacae" stroke="#cf7478" stroke-width="0.6"/>
<circle cx="413.2" cy="208.4" r="1.1" fill="#f6dcdc"/>
<path d="M296 210.6L301 204.4 306 210.6z" fill="#eaacae" stroke="#cf7478" stroke-width="0.6"/>
<circle cx="301" cy="208.4" r="1.1" fill="#f6dcdc"/>
<rect x="300" y="212.2" width="150" height="16" fill="#d35e61"/>
<rect x="300" y="212.2" width="150" height="1" fill="#e9a2a2"/>
<rect x="352.7" y="210.6" width="9.2" height="19" fill="#efc2c3"/>
<rect x="353.3" y="210.6" width="0.7" height="19" fill="#d07478"/>
<rect x="360.6" y="210.6" width="0.7" height="19" fill="#d07478"/>
<rect x="408.6" y="210.6" width="9.2" height="19" fill="#efc2c3"/>
<rect x="409.2" y="210.6" width="0.7" height="19" fill="#d07478"/>
<rect x="416.5" y="210.6" width="0.7" height="19" fill="#d07478"/>
<text x="374.9" y="221.5" font-family="'Liberation Serif','Noto Serif CJK SC',serif" font-size="5.6" font-weight="700" fill="#fff6f3">禮</text>
<text x="392.7" y="221.5" font-family="'Liberation Serif','Noto Serif CJK SC',serif" font-size="5.6" font-weight="700" fill="#fff6f3">堂</text>
<rect x="300" y="228" width="150" height="1.7" fill="#cb5456"/>
<rect x="300" y="229.7" width="150" height="5.2" fill="#e59fa0"/>
<rect x="300" y="231.6" width="150" height="0.7" fill="#f2c6c6"/>
<rect x="300" y="234.9" width="150" height="6" fill="#c95052"/>
<rect x="300" y="236.3" width="150" height="0.7" fill="#dd8888"/>
<rect x="300" y="240.9" width="150" height="14" fill="#b6353a"/>
<rect x="300" y="240.9" width="150" height="0.8" fill="#d47478"/>
<rect x="319.7" y="240.9" width="3.4" height="14" fill="#d07074"/>
<rect x="367.7" y="240.9" width="3.4" height="14" fill="#d07074"/>
<rect x="399.4" y="240.9" width="3.4" height="14" fill="#d07074"/>
<rect x="425" y="240.9" width="3.4" height="14" fill="#d07074"/>
<rect x="350.6" y="228.6" width="12.8" height="27" fill="#efc4c5"/>
<rect x="350.6" y="228.6" width="0.8" height="27" fill="#cc6a6e"/>
<rect x="362.6" y="228.6" width="0.8" height="27" fill="#cc6a6e"/>
<rect x="354.4" y="231" width="1.6" height="24" fill="#f6dede"/>
<rect x="358.4" y="231" width="1.2" height="24" fill="#f2d0d0"/>
<rect x="350" y="228.2" width="14" height="1.8" fill="#f2c8c8"/>
<rect x="408" y="228.6" width="12.8" height="27" fill="#efc4c5"/>
<rect x="408" y="228.6" width="0.8" height="27" fill="#cc6a6e"/>
<rect x="420" y="228.6" width="0.8" height="27" fill="#cc6a6e"/>
<rect x="411.8" y="231" width="1.6" height="24" fill="#f6dede"/>
<rect x="415.8" y="231" width="1.2" height="24" fill="#f2d0d0"/>
<rect x="407.4" y="228.2" width="14" height="1.8" fill="#f2c8c8"/>
</g>
<!-- grey statue photo -->
<g clip-path="url(#cpG)" id="statue">
<rect x="260" y="260" width="155" height="95" fill="#747b83"/>
<rect x="296" y="261" width="66" height="41" fill="url(#gBrick)"/>
<rect x="296" y="263" width="66" height="0.5" fill="#5f666e" opacity="0.4"/>
<rect x="296" y="265.8" width="66" height="0.5" fill="#5f666e" opacity="0.4"/>
<rect x="296" y="268.6" width="66" height="0.5" fill="#5f666e" opacity="0.4"/>
<rect x="296" y="271.4" width="66" height="0.5" fill="#5f666e" opacity="0.4"/>
<rect x="296" y="274.2" width="66" height="0.5" fill="#5f666e" opacity="0.4"/>
<rect x="296" y="277" width="66" height="0.5" fill="#5f666e" opacity="0.4"/>
<rect x="296" y="279.8" width="66" height="0.5" fill="#5f666e" opacity="0.4"/>
<rect x="296" y="282.6" width="66" height="0.5" fill="#5f666e" opacity="0.4"/>
<rect x="296" y="285.4" width="66" height="0.5" fill="#5f666e" opacity="0.4"/>
<rect x="296" y="288.2" width="66" height="0.5" fill="#5f666e" opacity="0.4"/>
<rect x="296" y="291" width="66" height="0.5" fill="#5f666e" opacity="0.4"/>
<rect x="296" y="293.8" width="66" height="0.5" fill="#5f666e" opacity="0.4"/>
<rect x="296" y="296.6" width="66" height="0.5" fill="#5f666e" opacity="0.4"/>
<rect x="296" y="299.4" width="66" height="0.5" fill="#5f666e" opacity="0.4"/>
<rect x="365.6" y="261" width="50" height="44" fill="#3d4752"/>
<rect x="359.8" y="261" width="5.8" height="44" fill="#959a9f"/>
<rect x="369.8" y="261" width="5.5" height="44" fill="#868d95"/>
<rect x="378.5" y="261" width="4.2" height="44" fill="#7d848c"/>
<rect x="385.4" y="261" width="4.2" height="44" fill="#727981"/>
<rect x="361.5" y="261" width="3" height="44" fill="#a3a7ab" opacity="0.8"/>
<rect x="371.5" y="261" width="2.4" height="44" fill="#9aa0a7" opacity="0.7"/>
<path d="M390.5 273l14-4v30h-14z" fill="#737980" filter="url(#b1)"/>
<path d="M375 267l8 3M381 287h13M381 292h13M389.5 273l16-5M392 277l8 12" stroke="#8d949c" stroke-width="0.7" fill="none"/>
<path d="M402 266.5l8-3v3.5l-6 2z" fill="#c9cdd1" filter="url(#b1)"/>
<path d="M312 301H384V338H300z" fill="#aeb3b8"/>
<path d="M312 301.2H384" stroke="#c6cacd" stroke-width="1"/>
<path d="M352 303c10-2 22-2 32 0v30h-32z" fill="#b9bdc1" filter="url(#b2)"/>
<rect x="316" y="322" width="40" height="12" fill="#a2a8ae" opacity="0.8" filter="url(#b2)"/>
<rect x="377.2" y="305.8" width="11.4" height="18" fill="#dcdee0"/>
<rect x="378.6" y="307.4" width="6" height="14.8" fill="#bfc3c7"/>
<rect x="378.6" y="308" width="6" height="0.7" fill="#e9eaeb"/>
<rect x="378.6" y="310.4" width="6" height="0.7" fill="#e9eaeb"/>
<rect x="378.6" y="312.8" width="6" height="0.7" fill="#e9eaeb"/>
<rect x="378.6" y="315.2" width="6" height="0.7" fill="#e9eaeb"/>
<rect x="378.6" y="317.6" width="6" height="0.7" fill="#e9eaeb"/>
<rect x="378.6" y="320" width="6" height="0.7" fill="#e9eaeb"/>
<rect x="385.4" y="306.4" width="2.6" height="16.8" fill="#f0f0f0"/>
<rect x="368" y="324.5" width="22" height="9" fill="#3a424b" filter="url(#b1)"/>
<rect x="260" y="335" width="160" height="18" fill="#50575e"/>
<path d="M362 338C366.7 334.3 387 331 392 334C397 337 396.7 352.3 392 356C387.3 359.7 369 359 364 356C359 353 357.3 341.7 362 338z" fill="#a6acb1" filter="url(#b2)"/>
<path d="M262 340C268.3 336.7 293.7 333.3 300 336C306.3 338.7 306.3 352.7 300 356C293.7 359.3 268.3 358.7 262 356C255.7 353.3 255.7 343.3 262 340z" fill="#2b3137" filter="url(#b2)"/>
<g filter="url(#b1)">
<path d="M260.1 357.3C248.2 354.7 265.5 346.1 267.7 342C270 337.8 271.7 336.2 273.5 332.4C275.2 328.6 276.6 322.9 278.3 319.4C279.9 315.9 281.7 314 283.4 311.3C285.2 308.7 287.6 306.6 288.8 303.7C290 300.8 290.4 297.3 290.7 294.1C291 291 289.1 287 290.7 284.9C292.3 282.9 296.7 282.3 300.3 281.9C303.8 281.5 310 281.2 312.1 282.7C314.3 284.1 313.2 288.1 313.3 290.3C313.4 292.5 312.2 294.1 312.7 296C313.2 298 315.1 300 316.5 301.8C318 303.5 319.7 304.7 321.3 306.6C322.9 308.5 324.9 311.3 326.1 313.3C327.2 315.2 327 317 328.2 318.2C329.4 319.5 331.9 319.5 333.2 320.9C334.4 322.3 335.6 324.7 335.8 326.7C336.1 328.6 334.8 330.5 334.9 332.4C335 334.3 336 336.2 336.6 338.1C337.2 340.1 338.1 341.1 338.5 344.3C338.9 347.4 352 355.1 338.9 357.3C325.8 359.4 271.9 359.8 260.1 357.3z" fill="#6b727a"/>
</g>
<g filter="url(#b2)">
<path d="M291.1 286.5C294.7 283.8 308.5 282.8 312.1 284.2C315.8 285.6 313.7 292.4 312.9 294.9C312.1 297.4 311.2 298.2 307.5 299.1C303.8 300 293.4 302.4 290.7 300.3C288 298.1 287.5 289.2 291.1 286.5z" fill="#555c64"/>
<path d="M291.1 284.6C292.7 283.7 297.7 282.5 301.2 282.3C304.7 282 310.3 282.5 312.1 283C313.9 283.6 313.9 285.3 312.1 285.7C310.3 286.1 304.7 285 301.2 285.3C297.8 285.6 293.2 287.8 291.5 287.6C289.8 287.5 289.5 285.5 291.1 284.6z" fill="#9aa0a6"/>
<path d="M288.8 301.8C290.8 300.8 296.4 300.2 300.3 299.5C304.2 298.8 309.8 297.2 312.1 297.6C314.4 298 316 300.8 314 301.8C312.1 302.8 304.5 303.1 300.3 303.7C296 304.3 290.3 305.9 288.4 305.6C286.5 305.3 286.8 302.8 288.8 301.8z" fill="#2f353c"/>
<path d="M290.7 306.6C293.1 305.3 299 303.9 303.1 303.7C307.3 303.5 312.9 304.1 315.6 305.2C318.3 306.3 321.5 309.8 319.4 310.4C317.3 311 308.2 308.5 303.1 308.7C298 308.8 290.9 311.7 288.8 311.3C286.7 311 288.3 307.8 290.7 306.6z" fill="#7e858c"/>
<path d="M314.6 303.7C315.9 303.4 319.7 306 321.7 307.9C323.7 309.8 326.1 313.3 326.7 315.2C327.2 317.1 326.5 319.4 325.1 319.4C323.8 319.4 320.5 316.8 318.6 315.2C316.8 313.5 314.7 311.3 314 309.4C313.4 307.5 313.3 304 314.6 303.7z" fill="#2f353c"/>
<path d="M280.7 316.7C282.4 315.8 286.6 312.1 290.7 311.3C294.8 310.6 302.4 311.7 305.6 312.5C308.9 313.3 309.4 315.7 310.2 316.3" fill="none" stroke="#2d353d" stroke-width="2.2" stroke-linecap="round"/>
<ellipse cx="294.5" cy="316.3" rx="6" ry="2.3" fill="#272e35"/>
<path d="M285 320.2C285 319.6 291.5 318.9 294.5 319C297.6 319.1 303.1 320 303.1 320.5C303.1 321 297.6 322.1 294.5 322.1C291.5 322 285 320.7 285 320.2z" fill="#b9bec4"/>
<path d="M278.1 325.1C280.4 323.4 285.2 322.4 290.7 322.1C296.1 321.7 306.4 321.7 310.8 322.8C315.2 324 317 327.1 317.1 329C317.2 330.8 315.8 332.8 311.4 333.9C307 335 296.5 335.7 290.7 335.5C284.9 335.2 278.6 334.1 276.5 332.4C274.4 330.7 275.7 326.8 278.1 325.1z" fill="#8f969d"/>
<path d="M285 326.3C285.9 325 292.6 324.4 296.4 324.4C300.3 324.4 306.3 325.2 307.9 326.3C309.5 327.4 308.9 329.9 306 330.9C303.1 331.8 294.2 332.8 290.7 332C287.2 331.2 284 327.5 285 326.3z" fill="#a8aeb4"/>
<path d="M315.2 322.1C316.7 320.8 322.1 319.8 325.1 320.2C328.1 320.5 331.5 322.3 333.2 324C334.8 325.7 335.7 328.8 335.1 330.5C334.4 332.1 331.9 333.6 329.3 333.9C326.8 334.2 322 333.4 319.8 332.4C317.5 331.4 316.7 329.5 316 327.8C315.2 326.1 313.7 323.3 315.2 322.1z" fill="#a4aab0"/>
<ellipse cx="323.6" cy="330.7" rx="3.4" ry="1.9" fill="#2f373f"/>
<path d="M333.2 320.2C333.6 319.6 336.3 323.1 337 325.1C337.7 327.2 337.6 330.5 337.4 332.4C337.1 334.3 335.9 337.2 335.5 336.6C335 336 335.1 331.3 334.7 328.6C334.3 325.8 332.8 320.7 333.2 320.2z" fill="#39414a"/>
<path d="M267.7 339.1C272.5 336.2 283.4 338.5 290.7 338.1C298 337.7 306 336.9 311.7 336.6C317.5 336.3 322.3 335.7 325.1 336.6C328 337.5 328.6 338.8 329 342C329.3 345.1 338.2 353.1 327 355.4C315.9 357.6 271.9 358.1 262 355.4C252.1 352.6 263 342 267.7 339.1z" fill="#2c3238"/>
<path d="M307 340C309 338.8 315.7 338.4 319.4 338.5C323.1 338.7 327.4 339.3 329 341C330.6 342.7 331.2 347.2 329 348.7C326.7 350.1 319.2 350.1 315.6 349.6C311.9 349.1 308.4 347.4 307 345.8C305.5 344.2 304.9 341.3 307 340z" fill="#6f767e"/>
</g>
<g filter="url(#b1)">
<path d="M335.5 357.3C330.3 354.4 334.7 344.1 335.8 340C337 336 339.7 334.4 342.4 332.8C345 331.2 348.7 330.2 351.9 330.5C355.1 330.7 359.1 332.4 361.5 334.3C363.9 336.2 365.6 338.1 366.5 342C367.4 345.8 372 354.7 366.8 357.3C361.7 359.8 340.6 360.1 335.5 357.3z" fill="#565d65"/>
</g>
<g filter="url(#b2)">
<path d="M343.3 334.3C344.5 333.2 349 331.9 351.9 332C354.8 332.1 358.7 333.8 360.5 335.1C362.4 336.3 364.1 339.3 363 339.7C361.9 340 356.9 337.5 353.8 337.4C350.8 337.2 346.4 339.4 344.6 338.9C342.9 338.4 342.1 335.5 343.3 334.3z" fill="#989ea4"/>
<path d="M338.5 342C339.8 340.7 344.9 340 348.1 340C351.3 340.1 355.1 341.1 357.7 342.3C360.2 343.6 364.4 347.1 363.4 347.7C362.4 348.3 355.7 346.2 351.9 346.2C348.1 346.2 342.7 348.4 340.4 347.7C338.2 347 337.3 343.2 338.5 342z" fill="#3b434b"/>
</g>
<ellipse cx="343.3" cy="314.8" rx="2.9" ry="2.6" fill="#262d33"/>
<path d="M340.1 318.6C341.1 317.2 344.9 316.8 346.2 317.9C347.5 318.9 348.7 323.7 347.7 325.1C346.7 326.5 341.3 327.4 340.1 326.3C338.8 325.2 339 320 340.1 318.6z" fill="#d9dcdf"/>
<path d="M344.6 325.1C345.7 324.4 350.3 323.7 351.5 324C352.8 324.3 353.3 326.3 352.3 327C351.3 327.7 346.7 328.5 345.4 328.2C344.1 327.9 343.6 325.8 344.6 325.1z" fill="#f6f6f6"/>
<path d="M338.9 326.3C340.1 325.6 344.2 325.6 345.4 326.3C346.6 326.9 347.3 329.5 346.2 330.1C345 330.7 339.7 330.7 338.5 330.1C337.3 329.5 337.8 326.9 338.9 326.3z" fill="#39414a"/>
</g>
</svg>
<svg viewBox="0 0 32 32" style="left:41.6px;top:48px;width:30.6px;height:30.6px" id="logo">
<circle cx="16" cy="16" r="15.6" fill="#9c2a32"/>
<g fill="none" stroke="#f1dcd8" stroke-width="1.05" stroke-linejoin="round">
<circle cx="16" cy="16" r="4.2"/>
<path d="M14.3 14.6h3.4v2.8h-3.4zM16 13.3v1.3M16 17.4v1.4" stroke-width="0.7"/>
<path id="bl" d="M11.4 4.2Q16 2.5 20.6 4.2L18.3 10.3Q16 9.6 13.7 10.3z"/>
<path d="M11.4 4.2Q16 2.5 20.6 4.2L18.3 10.3Q16 9.6 13.7 10.3z" transform="rotate(60 16 16)"/>
<path d="M11.4 4.2Q16 2.5 20.6 4.2L18.3 10.3Q16 9.6 13.7 10.3z" transform="rotate(120 16 16)"/>
<path d="M11.4 4.2Q16 2.5 20.6 4.2L18.3 10.3Q16 9.6 13.7 10.3z" transform="rotate(180 16 16)"/>
<path d="M11.4 4.2Q16 2.5 20.6 4.2L18.3 10.3Q16 9.6 13.7 10.3z" transform="rotate(240 16 16)"/>
<path d="M11.4 4.2Q16 2.5 20.6 4.2L18.3 10.3Q16 9.6 13.7 10.3z" transform="rotate(300 16 16)"/>
</g>
</svg>
<div id="t1"><span style="position:static;display:inline-block;font-size:18.4px;transform:scaleX(.88);transform-origin:0 50%;margin-right:-4px">EMI</span>課程發展與設計<span style="position:static;font-family:'Liberation Sans',sans-serif;font-weight:400;font-size:15.2px">—</span></div>
<div id="t2">以「IB哲學與實作」課程為例</div>
<div id="rule"></div>
<div id="pgn">38</div>
</div>

<div id="main"><div class="in">
<svg viewBox="453.2 162.4 157.2 130" style="left:0;top:0;width:157.2px;height:130px" id="vid">
<defs>
<linearGradient id="gVw" x1="0" y1="162" x2="0" y2="293" gradientUnits="userSpaceOnUse">
<stop offset="0" stop-color="#cbcdbd"/><stop offset="0.22" stop-color="#d5d6ca"/><stop offset="0.6" stop-color="#d9dad1"/><stop offset="1" stop-color="#dadbd3"/>
</linearGradient>
<linearGradient id="gVh" x1="453" y1="0" x2="611" y2="0" gradientUnits="userSpaceOnUse"><stop offset="0" stop-color="#000" stop-opacity="0.05"/><stop offset="0.4" stop-color="#fff" stop-opacity="0.03"/><stop offset="1" stop-color="#fff" stop-opacity="0.22"/></linearGradient>
<pattern id="lat" width="17" height="30" patternUnits="userSpaceOnUse" patternTransform="translate(468 250) rotate(6)">
<rect width="17" height="30" fill="#111115"/>
<path d="M0 0L8.5 15 0 30M17 0L8.5 15 17 30" fill="none" stroke="#e0e0e0" stroke-width="0.7"/>
<path d="M8.5 0L0 15 8.5 30M8.5 0L17 15 8.5 30" fill="none" stroke="#c8c8c8" stroke-width="0.55"/>
</pattern>
<filter id="v1" x="-20%" y="-20%" width="140%" height="140%"><feGaussianBlur stdDeviation="0.6"/></filter>
<filter id="v2" x="-20%" y="-20%" width="140%" height="140%"><feGaussianBlur stdDeviation="1.5"/></filter>
<filter id="v3" x="-30%" y="-30%" width="160%" height="160%"><feGaussianBlur stdDeviation="3"/></filter>
</defs>
<rect x="450" y="160" width="165" height="136" fill="url(#gVw)"/>
<rect x="450" y="160" width="165" height="136" fill="url(#gVh)"/>
<path d="M581 268H612V294H583z" fill="#bfae96" filter="url(#v1)"/>
<path d="M579.5 265.4H612V268.8H580z" fill="#dad2c2" filter="url(#v1)"/>
<path d="M583 271.5h29v3.5h-29z" fill="#9c8b72" opacity="0.7" filter="url(#v1)"/>
<path d="M596 256.5c0-1.5.8-2.3 1.5-2.6v-2.6h2.2v2.6c.8.3 1.5 1.1 1.5 2.6v10h-5.2z" fill="#e9e9e2" filter="url(#v1)"/>
<path d="M599.8 255v11" stroke="#a9a99e" stroke-width="1.1" filter="url(#v1)"/>
<g filter="url(#v1)">
<path d="M453.7 221.8C454.5 217.6 455.9 213 458.1 210.6C460.4 208.3 464.5 208.1 467.3 207.9C470.1 207.6 474.3 206.6 474.8 209C475.4 211.3 472.2 217.1 470.4 221.8C468.5 226.5 466 232.9 463.7 237.1C461.4 241.3 458.2 247.1 456.5 246.9C454.7 246.6 453.6 239.9 453.1 235.7C452.6 231.5 452.8 226 453.7 221.8z" fill="#7aa262"/>
<path d="M457.6 219C458.7 214.7 460.5 212.8 462.6 211.2C464.6 209.6 469.2 208.2 469.8 209.5C470.5 210.8 468 215.1 466.5 219C465 222.9 462.7 229.9 460.9 232.9C459.1 235.9 456.5 239.4 455.9 237.1C455.3 234.8 456.5 223.3 457.6 219z" fill="#b9d2a3"/>
<path d="M455.3 241.3C456.4 238.5 459 229.9 461.7 224.6C464.5 219.3 470.3 212 472.1 209.5" fill="none" stroke="#cfe0ba" stroke-width="0.7"/>
<path d="M459.8 251.9C460.6 249.7 464 245.5 467.3 243.5C470.7 241.6 475.8 240 479.9 240.2C483.9 240.4 491 242.7 491.6 244.6C492.1 246.6 486.5 250 483.2 251.9C479.9 253.7 474.9 255 471.5 255.8C468.1 256.6 464.5 257.3 462.6 256.6C460.6 256 459 254 459.8 251.9z" fill="#6f9a58"/>
<path d="M465.4 250.2C466.2 248.6 470.8 245 474.3 244.1C477.8 243.1 485.8 243.6 486.5 244.6C487.3 245.6 481.6 248.7 478.7 250.2C475.9 251.7 471.5 253.5 469.3 253.5C467 253.5 464.5 251.8 465.4 250.2z" fill="#a8c692"/>
<path d="M452.6 246.9C453.3 241.6 456.3 249.7 457.6 253C458.9 256.2 460.3 261.6 460.4 266.4C460.4 271.1 459.3 278.7 458.1 281.7C456.9 284.7 454 290.3 453.1 284.5C452.2 278.7 451.8 252.1 452.6 246.9z" fill="#4f7a40"/>
<path d="M457.6 244.6C457.8 247.8 458.8 257.2 458.7 263.6C458.6 270 457.3 279.8 457 283.1" fill="none" stroke="#4d7a3a" stroke-width="1.1"/>
<path d="M452 260.8C452.5 258.5 455.5 261.2 456.5 263.6C457.4 265.9 458 272.4 457.6 274.7C457.1 277 454.6 279.8 453.7 277.5C452.7 275.2 451.5 263.1 452 260.8z" fill="#587f45"/>
<path d="M450.6 283.1C452.2 280.4 458.2 278.5 460.4 280.8C462.5 283.2 465.3 294.3 463.7 297C462.1 299.7 452.8 299.3 450.6 297C448.4 294.7 449 285.8 450.6 283.1z" fill="#b9bbb0"/>
</g>
<g filter="url(#v1)">
<path d="M457.6 297C435.5 292.8 460.1 281 463.1 274.7C466.2 268.4 470.6 263.6 475.7 259.4C480.8 255.2 487.7 250.6 493.8 249.6C499.8 248.7 506.3 251.5 511.9 253.8C517.5 256.1 521.9 262.6 527.2 263.6C532.5 264.5 538.6 261.9 543.9 259.4C549.3 256.9 554.6 250.4 559.2 248.5C563.9 246.6 568 246.2 572.1 248C576.1 249.7 580.3 254.9 583.5 259.1C586.7 263.3 589.4 268.6 591.3 273.3C593.1 278 593.9 282.8 594.6 287.2C595.4 291.7 618.6 298.2 595.7 299.8C572.9 301.4 479.7 301.2 457.6 297z" fill="url(#lat)"/>
</g>
<path d="M517.5 255.2C520.2 253.4 531.6 253.8 535.6 255.2C539.5 256.6 541.1 260.5 541.1 263.6C541.1 266.6 538.3 271.5 535.6 273.3C532.9 275.2 527.8 275.9 525 274.7C522.2 273.5 520.1 269.6 518.9 266.4C517.6 263.1 514.7 257.1 517.5 255.2z" fill="#c3927c" filter="url(#v1)"/>
<path d="M514.7 266.9C516.3 266.2 521.5 272 525 272.5C528.5 272.9 533.6 268.8 535.6 269.7C537.6 270.6 538.7 276.1 537 278.1C535.2 280 528.6 281.6 525 281.4C521.4 281.2 517.2 279.1 515.5 276.7C513.8 274.2 513.1 267.6 514.7 266.9z" fill="#141418" filter="url(#v1)"/>
<g filter="url(#v1)">
<path d="M492.9 217.6C494.7 210.6 497.4 200.8 502.1 195.3C506.9 189.9 514.9 185.8 521.6 185C528.4 184.2 536.9 187 542.5 190.6C548.2 194.2 552.7 200.8 555.6 206.5C558.5 212.1 559.4 218.4 560.1 224.6C560.7 230.7 561.2 239.2 559.5 243.5C557.8 247.8 554 248.2 550.1 250.2C546.1 252.1 540.8 253.7 535.6 255.2C530.4 256.7 524 258.4 518.9 259.4C513.7 260.4 509 261.8 504.9 261.3C500.8 260.9 496.6 260.6 494.3 256.6C492.1 252.6 491.8 243.6 491.6 237.1C491.3 230.6 491.2 224.6 492.9 217.6z" fill="#1a1511"/>
<path d="M509.1 193.9C511 192.1 518.4 188.8 523 188.4C527.7 187.9 533.5 189.7 537 191.1C540.4 192.6 545.5 196.7 543.9 197.3C542.3 197.8 532.5 194.1 527.2 194.5C521.9 194.9 514.9 199.6 511.9 199.5C508.9 199.4 507.2 195.8 509.1 193.9z" fill="#332a22" opacity="0.4"/>
</g>
<g filter="url(#v1)">
<path d="M513.6 225.3C514.6 222.2 516.2 222.6 518.7 221C521.3 219.4 525.5 217.2 528.9 215.9C532.3 214.6 535.9 213.4 539.1 213C542.3 212.6 545.6 212.6 548.1 213.7C550.6 214.8 552.5 216.9 553.9 219.5C555.3 222.2 555.9 226.3 556.4 229.7C556.9 233.1 557.2 236.7 556.8 239.9C556.4 243 555.1 245.9 553.9 248.6C552.7 251.3 551.5 253.8 549.5 255.9C547.6 258 545.2 260.1 542.3 261.1C539.3 262.1 535.2 262.1 531.8 261.7C528.4 261.3 524.5 260.4 521.9 258.8C519.3 257.1 517.6 255 516.1 251.8C514.6 248.7 513.3 244.3 512.9 239.9C512.5 235.5 512.7 228.5 513.6 225.3z" fill="#d8ae98"/>
<path d="M539.1 229.7C540.5 227.9 545.5 228.3 548.1 229C550.6 229.7 553.4 231.7 554.3 234.1C555.3 236.4 554.9 241.1 553.6 243.1C552.3 245 548.6 246.2 546.3 245.7C544 245.2 541 242.5 539.8 239.9C538.6 237.2 537.7 231.5 539.1 229.7z" fill="#e6c4ae" opacity="0.9"/>
<path d="M513.6 231.2C514.7 228.5 518.6 228.3 520.2 229.7C521.7 231.2 522.4 236.2 523.1 239.9C523.8 243.5 525.3 249.1 524.5 251.5C523.8 253.9 520.5 255.4 518.7 254.4C517 253.4 514.9 249.6 514.1 245.7C513.2 241.8 512.6 233.8 513.6 231.2z" fill="#c4957e" opacity="0.8"/>
<path d="M507.1 228.3C506.4 223.7 504.2 214.9 507.1 210.8C510 206.7 518 204.5 524.5 203.5C531.1 202.6 540.8 203.3 546.3 205C551.9 206.7 555.7 210.1 558 213.7C560.3 217.4 560 222.4 560.1 226.8C560.3 231.2 559.7 238.7 559.1 239.9C558.5 241.1 557.2 237 556.5 234.1C555.8 231.2 555.9 225.6 554.8 222.4C553.7 219.2 552.2 216.8 550 214.9C547.7 212.9 544.3 211 541.2 210.8C538.2 210.7 534.8 212.6 531.8 214C528.8 215.5 525.7 217.4 523.1 219.5C520.4 221.7 517.8 223.7 515.8 226.8C513.9 230 512.9 238.2 511.5 238.4C510 238.7 507.8 232.9 507.1 228.3z" fill="#1a1511"/>
<path d="M524.2 225.1C525.4 224.7 528.8 223.2 531.1 223C533.4 222.9 536.8 224 537.9 224.2" fill="none" stroke="#3b2a22" stroke-width="1" stroke-linecap="round"/>
<path d="M544.3 223.3C545.1 223.2 547.4 222.3 549 222.4C550.5 222.5 552.8 223.7 553.6 223.9" fill="none" stroke="#3b2a22" stroke-width="0.9" stroke-linecap="round"/>
<ellipse cx="531.8" cy="228" rx="3.8" ry="1.4" fill="#2a1b17"/>
<ellipse cx="548.4" cy="227.2" rx="3.3" ry="1.3" fill="#2a1b17"/>
<path d="M543.7 229.7C544 230.8 545.3 234.6 545.2 236.2C545 237.9 543.6 239.2 542.7 239.9C541.8 240.5 540.3 240.1 539.8 240.2" fill="none" stroke="#b88670" stroke-width="0.9"/>
<path d="M536.2 250.3C536.4 249.5 538.6 248.6 539.8 248.3C541 248.1 542 249 543.1 248.9C544.2 248.8 545.3 247.6 546.3 247.7C547.4 247.8 549.3 248.6 549.5 249.5C549.7 250.3 548.6 252.1 547.5 253C546.4 253.8 544.2 254.4 542.7 254.4C541.2 254.5 539.4 253.9 538.3 253.3C537.3 252.6 535.9 251.2 536.2 250.3z" fill="#ad2446"/>
<path d="M536.5 250.5C537.5 250.6 540.6 251.1 542.7 250.9C544.8 250.8 548.2 249.8 549.2 249.6" fill="none" stroke="#7d1430" stroke-width="0.5"/>
</g>
</svg>
<div class="more"></div>
<svg viewBox="0 0 16 16" style="left:144.7px;top:6px;width:7px;height:7px"><circle cx="3.5" cy="8" r="1.5" fill="#0b3a75"/><circle cx="8" cy="8" r="1.5" fill="#0b3a75"/><circle cx="12.5" cy="8" r="1.5" fill="#0b3a75"/></svg>
<svg viewBox="0 0 16 16" style="left:6.8px;top:118.8px;width:6.6px;height:6.6px"><path d="M5 2h6v1.2l-1 .8v3.5l2 2v1.2H8.7V15h-1.4v-4.3H4V9.5l2-2V4l-1-.8z" fill="#fff"/></svg>
<div class="nm">臺師大劉美慧Meihui Liu</div>
</div></div>

<div class="tile" style="top:73.7px;background:radial-gradient(ellipse 72% 85% at 50% 50%,#8a3721 0%,#7b301d 50%,#5e2415 100%)">
<div class="av" style="background:#d9431e;font-size:7.6px">珮嘉</div>
<div class="mu" style="background:#5e1509"><svg viewBox="0 0 16 16"><path d="M8 2.2a1.8 1.8 0 0 1 1.8 1.8v3.6a1.8 1.8 0 0 1-3.6 0V4A1.8 1.8 0 0 1 8 2.2z" fill="#f6e4df"/><path d="M4.3 7.6a3.7 3.7 0 0 0 7.4 0M8 11.3v2.4" fill="none" stroke="#f6e4df" stroke-width="1.2" stroke-linecap="round"/><path d="M2.6 2.4l10.8 11.2" stroke="#f6e4df" stroke-width="1.3" stroke-linecap="round"/></svg></div>
<div class="nm">郭珮嘉</div>
</div>
<div class="tile" style="top:121.9px;background:#3c4043">
<svg viewBox="640.9 121.9 28.3 43.6" style="left:24.1px;top:0;width:28.3px;height:43.6px" id="irene">
<defs><filter id="i1" x="-20%" y="-20%" width="140%" height="140%"><feGaussianBlur stdDeviation="0.35"/></filter></defs>
<rect x="640" y="121" width="30" height="45" fill="#cfcfc7"/>
<g filter="url(#i1)">
<rect x="640.9" y="121.9" width="11" height="28" fill="#e6e6e2"/>
<rect x="640.9" y="121.9" width="28.3" height="5.6" fill="#d9d9d3"/>
<path d="M644 128v22M647.5 128v22" stroke="#c9c9c4" stroke-width="0.5"/>
<rect x="665.2" y="141" width="4.2" height="11" fill="#5e7c84"/>
<path d="M640.9 166.8C636.2 164.7 640.1 156.6 640.9 154C641.7 151.5 643.7 152.1 645.6 151.6C647.4 151 649.3 151 652.1 150.8C654.9 150.7 659.7 150.5 662.3 150.8C664.8 151.1 666.2 151.9 667.3 152.6C668.5 153.3 668.9 152.8 669.2 155.2C669.5 157.6 673.9 164.9 669.2 166.8C664.5 168.7 645.6 168.9 640.9 166.8z" fill="#c59aa0"/>
<path d="M643.4 158.1C644.1 156.5 646.5 155 647.7 155.2C649 155.4 650.6 157.9 650.6 159.5C650.6 161.2 648.9 164.5 647.7 165.4C646.6 166.2 644.4 165.8 643.7 164.6C643 163.4 642.7 159.7 643.4 158.1z" fill="#a97a84" opacity="0.6"/>
<path d="M663.7 156.6C664.4 155.6 666.5 155.2 667.3 155.9C668.2 156.6 669 159.4 668.8 161C668.5 162.6 666.9 165.1 665.9 165.4C664.9 165.6 663.3 163.9 663 162.5C662.6 161 663 157.7 663.7 156.6z" fill="#a97a84" opacity="0.6"/>
<path d="M653.5 159.5C654.2 158.8 655.6 162.2 656.7 162.2C657.9 162.1 659.7 158.5 660.5 159.3C661.3 160 662.9 165.5 661.7 166.8C660.4 168.1 654.3 168 653 166.8C651.6 165.6 652.9 160.3 653.5 159.5z" fill="#18181a"/>
<path d="M652.4 149.7C653.7 148.4 659.7 148.4 661.1 149.7C662.5 151 661.5 155.4 660.8 157.4C660.1 159.3 658 161.3 656.7 161.3C655.4 161.3 653.7 159.3 653 157.4C652.2 155.4 651 151 652.4 149.7z" fill="#b98e7e"/>
<path d="M648.3 137.8C648.6 135.4 649.2 132.4 650.6 130.8C652 129.3 654.8 128.5 656.7 128.5C658.7 128.4 661.1 129 662.5 130.5C664 132.1 665.1 135.4 665.5 137.8C665.8 140.2 665.4 144.8 664.9 145C664.3 145.3 663.6 141.2 662.3 139.2C660.9 137.3 658.6 133.4 656.7 133.4C654.9 133.4 652.6 137.3 651.4 139.2C650.1 141.2 649.7 145.3 649.2 145C648.7 144.8 648.1 140.1 648.3 137.8z" fill="#2d221d"/>
<path d="M649.8 139.2C650.1 137 650.9 134.9 652.1 133.7C653.3 132.5 655.1 132 656.7 132C658.3 132 660.5 132.5 661.7 133.7C662.9 134.9 663.7 137 664 139.2C664.3 141.5 664.1 145 663.4 147.2C662.8 149.4 661.2 151.2 660.1 152.3C659 153.3 657.9 153.5 656.7 153.5C655.6 153.5 654.3 153.3 653.3 152.3C652.2 151.2 650.9 149.4 650.4 147.2C649.8 145 649.5 141.5 649.8 139.2z" fill="#caa08e"/>
<path d="M653.5 143.6C654 142.5 655.7 142.1 656.7 142.1C657.8 142.1 659.6 142.5 660.1 143.6C660.5 144.7 659.9 147.6 659.4 148.7C658.8 149.7 657.6 150.1 656.7 150.1C655.9 150.1 654.7 149.7 654.1 148.7C653.6 147.6 653.1 144.7 653.5 143.6z" fill="#d9b3a2" opacity="0.8"/>
<path d="M649.8 141h14.2" stroke="#3b2f2c" stroke-width="0.6"/>
<rect x="650.6" y="140.4" width="5.6" height="3.6" rx="1.2" fill="none" stroke="#4a3d3a" stroke-width="0.55"/>
<rect x="657.6" y="140.4" width="5.6" height="3.6" rx="1.2" fill="none" stroke="#4a3d3a" stroke-width="0.55"/>
<path d="M654.7 149.7C655 149.8 656 150.3 656.7 150.3C657.5 150.3 658.7 149.8 659.1 149.7" fill="none" stroke="#a06a62" stroke-width="0.6"/>
</g>
</svg>
<div class="nm">Irene Yang</div>
</div>
<div class="tile" style="top:170.1px;background:radial-gradient(ellipse 72% 85% at 50% 50%,#0a483f 0%,#093e36 50%,#062d27 100%)">
<div class="av" style="background:#0a5a4e;font-size:9.6px">J</div>
<div class="mu" style="background:transparent"><svg viewBox="0 0 16 16"><path d="M8 2.2a1.8 1.8 0 0 1 1.8 1.8v3.6a1.8 1.8 0 0 1-3.6 0V4A1.8 1.8 0 0 1 8 2.2z" fill="#7fd6c4"/><path d="M4.3 7.6a3.7 3.7 0 0 0 7.4 0M8 11.3v2.4" fill="none" stroke="#7fd6c4" stroke-width="1.2" stroke-linecap="round"/><path d="M2.6 2.4l10.8 11.2" stroke="#7fd6c4" stroke-width="1.3" stroke-linecap="round"/></svg></div>
<div class="nm">Johnny Wen</div>
</div>
<div class="tile" style="top:218.1px;background:radial-gradient(ellipse 72% 85% at 50% 50%,#782c86 0%,#6a2678 50%,#531c60 100%)">
<div class="av" style="background:#ab47bc;font-size:7.6px">書儀</div>
<div class="mu" style="background:#581a7a"><svg viewBox="0 0 16 16"><path d="M8 2.2a1.8 1.8 0 0 1 1.8 1.8v3.6a1.8 1.8 0 0 1-3.6 0V4A1.8 1.8 0 0 1 8 2.2z" fill="#f3e1f7"/><path d="M4.3 7.6a3.7 3.7 0 0 0 7.4 0M8 11.3v2.4" fill="none" stroke="#f3e1f7" stroke-width="1.2" stroke-linecap="round"/><path d="M2.6 2.4l10.8 11.2" stroke="#f3e1f7" stroke-width="1.3" stroke-linecap="round"/></svg></div>
<div class="nm">賴書儀</div>
</div>
<div class="tile" style="top:266.1px;background:radial-gradient(ellipse 72% 85% at 50% 50%,#185c7a 0%,#13506c 50%,#0c3a52 100%)">
<div class="av" style="background:#0a84d0;font-size:9.6px">W</div>
<div class="mu" style="background:#0b3548"><svg viewBox="0 0 16 16"><path d="M8 2.2a1.8 1.8 0 0 1 1.8 1.8v3.6a1.8 1.8 0 0 1-3.6 0V4A1.8 1.8 0 0 1 8 2.2z" fill="#d6eef9"/><path d="M4.3 7.6a3.7 3.7 0 0 0 7.4 0M8 11.3v2.4" fill="none" stroke="#d6eef9" stroke-width="1.2" stroke-linecap="round"/><path d="M2.6 2.4l10.8 11.2" stroke="#d6eef9" stroke-width="1.3" stroke-linecap="round"/></svg></div>
<div class="nm">Willem Van der Merwe</div>
</div>
<div class="tile" style="top:314.1px;background:#35373a">
<div style="left:24.8px;top:10.8px;width:14.6px;height:14.6px;border-radius:50%;background:#1565c0;font-size:5.6px;line-height:14.8px;text-align:center;color:#d7e6fb">彥志</div>
<div style="left:38.4px;top:10.8px;width:14.6px;height:14.6px;border-radius:50%;background:#6d4c41;font-size:5.6px;line-height:14.8px;text-align:center;color:#f0dfd8">明倫</div>
<div style="left:0;top:27.9px;width:77.4px;height:8px;line-height:8px;font-size:4.6px;font-weight:700;text-align:center;color:#fff;white-space:nowrap">還有另外 58 位使用者</div>
</div>
<div style="left:687.6px;top:230px;width:11.2px;height:11.2px;border-radius:1.5px;background:rgba(196,200,232,.82);font-size:2.8px;line-height:3.6px;color:#6f7fd0;text-align:center;padding-top:2px;font-weight:700">RTF<br>JPG</div>
<div style="left:695px;top:242.5px;width:4px;height:3.4px;border-radius:1px;background:#8d1c1c"></div>
<div id="toast"><svg viewBox="0 0 16 16" style="left:6.2px;top:4.6px;width:10.8px;height:10.8px"><circle cx="8" cy="8" r="7.8" fill="#d8d59a"/><circle cx="8" cy="8" r="6" fill="#8e8c4a"/><circle cx="8" cy="8" r="4.6" fill="#d9d6a6"/><circle cx="8" cy="8" r="3" fill="#a774b8"/></svg><div class="tx">某位使用者想加入這場通話</div><div class="lk">檢視</div></div>
<div id="clock">下午2:24<span style="position:static;color:#8f9193;font-weight:400;padding:0 3.4px 0 3.7px">|</span><span style="position:static;letter-spacing:0.27px">voj-qekw-mae</span></div>
<div class="cb" style="left:242px;width:33.4px;background:#5f1411;border-radius:5px"></div>
<div class="cb" style="left:257.4px;width:18px;background:#dda6a1;border-radius:5px"></div>
<div class="cb" style="left:278.7px;width:33.6px;background:#5f1411;border-radius:5px"></div>
<div class="cb" style="left:294.6px;width:17.8px;background:#dda6a1;border-radius:5px"></div>
<svg viewBox="0 0 16 16" style="left:246.8px;top:394.7px;width:6px;height:6px"><path d="M3.5 10L8 5.5l4.5 4.5" fill="none" stroke="#f3d6d3" stroke-width="1.9" stroke-linecap="round" stroke-linejoin="round"/></svg>
<svg viewBox="0 0 16 16" style="left:283.6px;top:394.7px;width:6px;height:6px"><path d="M3.5 10L8 5.5l4.5 4.5" fill="none" stroke="#f3d6d3" stroke-width="1.9" stroke-linecap="round" stroke-linejoin="round"/></svg>
<svg viewBox="0 0 16 16" style="left:262.1px;top:393.4px;width:8.6px;height:8.6px"><path d="M8 2.2a1.8 1.8 0 0 1 1.8 1.8v3.6a1.8 1.8 0 0 1-3.6 0V4A1.8 1.8 0 0 1 8 2.2z" fill="#5c1410"/><path d="M4.3 7.6a3.7 3.7 0 0 0 7.4 0M8 11.3v2.4" fill="none" stroke="#5c1410" stroke-width="1.2" stroke-linecap="round"/><path d="M2.6 2.4l10.8 11.2" stroke="#5c1410" stroke-width="1.3" stroke-linecap="round"/></svg>
<svg viewBox="0 0 16 16" style="left:299.2px;top:393.4px;width:8.6px;height:8.6px"><path d="M2.5 4.5h8v7h-8zM10.5 7l3-2v6l-3-2" fill="none" stroke="#5c1410" stroke-width="1.3" stroke-linejoin="round"/><path d="M2.4 2.4l11 11.4" stroke="#5c1410" stroke-width="1.3" stroke-linecap="round"/></svg>
<div style="left:269.4px;top:386.9px;width:7.6px;height:7.6px;border-radius:50%;background:#fdd663;font-size:5px;line-height:7.8px;text-align:center;color:#3a2f00;font-weight:700">!</div>
<div style="left:306.1px;top:386.9px;width:7.6px;height:7.6px;border-radius:50%;background:#fdd663;font-size:5px;line-height:7.8px;text-align:center;color:#3a2f00;font-weight:700">!</div>
<div class="cb" style="left:315.7px;width:21.3px"><svg viewBox="0 0 16 16" style="left:5.8px"><path d="M2.5 3.5h11v7.5h-11z" fill="none" stroke="#e3e3e3" stroke-width="1.5" stroke-linejoin="round" stroke-linecap="round"/><path d="M1 13.2h14" fill="none" stroke="#e3e3e3" stroke-width="1.5" stroke-linejoin="round" stroke-linecap="round"/><path d="M8 9V5.8M6.4 7.2L8 5.6l1.6 1.6" fill="none" stroke="#e3e3e3" stroke-width="1.5" stroke-linejoin="round" stroke-linecap="round"/></svg></div>
<div class="cb" style="left:340.2px;width:21.3px"><svg viewBox="0 0 16 16" style="left:5.8px"><circle cx="8" cy="8" r="5.8" fill="none" stroke="#e3e3e3" stroke-width="1.5" stroke-linejoin="round" stroke-linecap="round"/><circle cx="6" cy="6.6" r=".9" fill="#e3e3e3"/><circle cx="10" cy="6.6" r=".9" fill="#e3e3e3"/><path d="M5.3 9.4a3 3 0 0 0 5.4 0z" fill="#e3e3e3"/></svg></div>
<div class="cb" style="left:364.4px;width:21.2px"><svg viewBox="0 0 16 16" style="left:5.7px"><path d="M2.5 3h11v10h-11z" fill="none" stroke="#e3e3e3" stroke-width="1.5" stroke-linejoin="round" stroke-linecap="round"/><path d="M5 8.2h2M9 8.2h2M5 10.4h6" fill="none" stroke="#e3e3e3" stroke-width="1.5" stroke-linejoin="round" stroke-linecap="round"/></svg></div>
<div class="cb" style="left:388.9px;width:21.2px"><svg viewBox="0 0 16 16" style="left:5.7px"><path d="M4 8.5V4.2a1 1 0 0 1 2 0V3a1 1 0 0 1 2 0v.600a1 1 0 0 1 2 0V4.8a1 1 0 0 1 2 0V10c0 2.5-1.8 4-4 4-1.9 0-3-.9-3.9-2.4L2.3 8.8c.4-.7 1.2-.8 1.7-.3z" fill="#e3e3e3"/></svg></div>
<div class="cb" style="left:413px;width:13.6px"><svg viewBox="0 0 16 16" style="left:1.9px"><circle cx="8" cy="3.2" r="1.5" fill="#e3e3e3"/><circle cx="8" cy="8" r="1.5" fill="#e3e3e3"/><circle cx="8" cy="12.8" r="1.5" fill="#e3e3e3"/></svg></div>
<div class="cb" style="left:430px;width:27.4px;background:#dc362e"><svg viewBox="0 0 16 16" style="left:8.4px;top:4px;width:10.6px;height:10.6px"><path d="M1 9.6C3 7.6 5.4 6.6 8 6.6s5 1 7 3l-1.8 1.9-2.3-1.5V8.6a8 8 0 0 0-5.8 0V10l-2.3 1.5z" fill="#fff"/></svg></div>
<svg class="ri" viewBox="0 0 16 16" style="left:608.1px"><circle cx="8" cy="8" r="6.2" fill="none" stroke="#e3e3e3" stroke-width="1.5" stroke-linejoin="round" stroke-linecap="round"/><path d="M8 7.4v3.8" fill="none" stroke="#e3e3e3" stroke-width="1.5" stroke-linejoin="round" stroke-linecap="round"/><circle cx="8" cy="5" r=".9" fill="#e3e3e3"/></svg>
<svg class="ri" viewBox="0 0 16 16" style="left:626.6px"><circle cx="6" cy="5.4" r="2.3" fill="none" stroke="#e3e3e3" stroke-width="1.5" stroke-linejoin="round" stroke-linecap="round"/><path d="M1.6 13c0-2.4 2-3.8 4.4-3.8s4.4 1.4 4.4 3.8z" fill="none" stroke="#e3e3e3" stroke-width="1.5" stroke-linejoin="round" stroke-linecap="round"/><path d="M10.4 3.3a2.3 2.3 0 0 1 0 4.3M12.3 9.7c1.4.6 2.3 1.7 2.3 3.3h-2" fill="none" stroke="#e3e3e3" stroke-width="1.5" stroke-linejoin="round" stroke-linecap="round"/></svg>
<div style="left:631.6px;top:385.9px;width:10.6px;height:6.4px;border-radius:3.2px;background:#42454a;font-size:4.3px;line-height:6.6px;text-align:center;color:#e3e3e3">65</div>
<svg class="ri" viewBox="0 0 16 16" style="left:644.8px"><path d="M2 2.5h12v9H5l-3 3z" fill="none" stroke="#e3e3e3" stroke-width="1.5" stroke-linejoin="round" stroke-linecap="round"/><path d="M4.8 5.6h6.4M4.8 8.2h6.4" fill="none" stroke="#e3e3e3" stroke-width="1.5" stroke-linejoin="round" stroke-linecap="round"/></svg>
<svg class="ri" viewBox="0 0 16 16" style="left:663.4px"><g fill="#e3e3e3"><rect x="2" y="2" width="3" height="3"/><rect x="6.5" y="2" width="3" height="3"/><rect x="11" y="2" width="3" height="3"/><rect x="2" y="6.5" width="3" height="3"/><rect x="6.5" y="6.5" width="3" height="3"/><rect x="11" y="6.5" width="3" height="3"/><rect x="2" y="11" width="3" height="3"/><rect x="6.5" y="11" width="3" height="3"/><rect x="11" y="11" width="3" height="3"/></g></svg>
<svg class="ri" viewBox="0 0 16 16" style="left:682px"><path d="M3.2 6.8h8.6v7.4H3.2z" fill="none" stroke="#e3e3e3" stroke-width="1.5" stroke-linejoin="round" stroke-linecap="round"/><path d="M5 6.8V4.4a2.5 2.5 0 0 1 5 0V6.8" fill="none" stroke="#e3e3e3" stroke-width="1.5" stroke-linejoin="round" stroke-linecap="round"/><circle cx="12.3" cy="12.6" r="2.9" fill="#e3e3e3" stroke="#131314" stroke-width="0.8"/><path d="M12.3 11.2v1.6M12.3 13.8v.2" stroke="#131314" stroke-width="0.9"/></svg>
</div>
</body>
</html>
